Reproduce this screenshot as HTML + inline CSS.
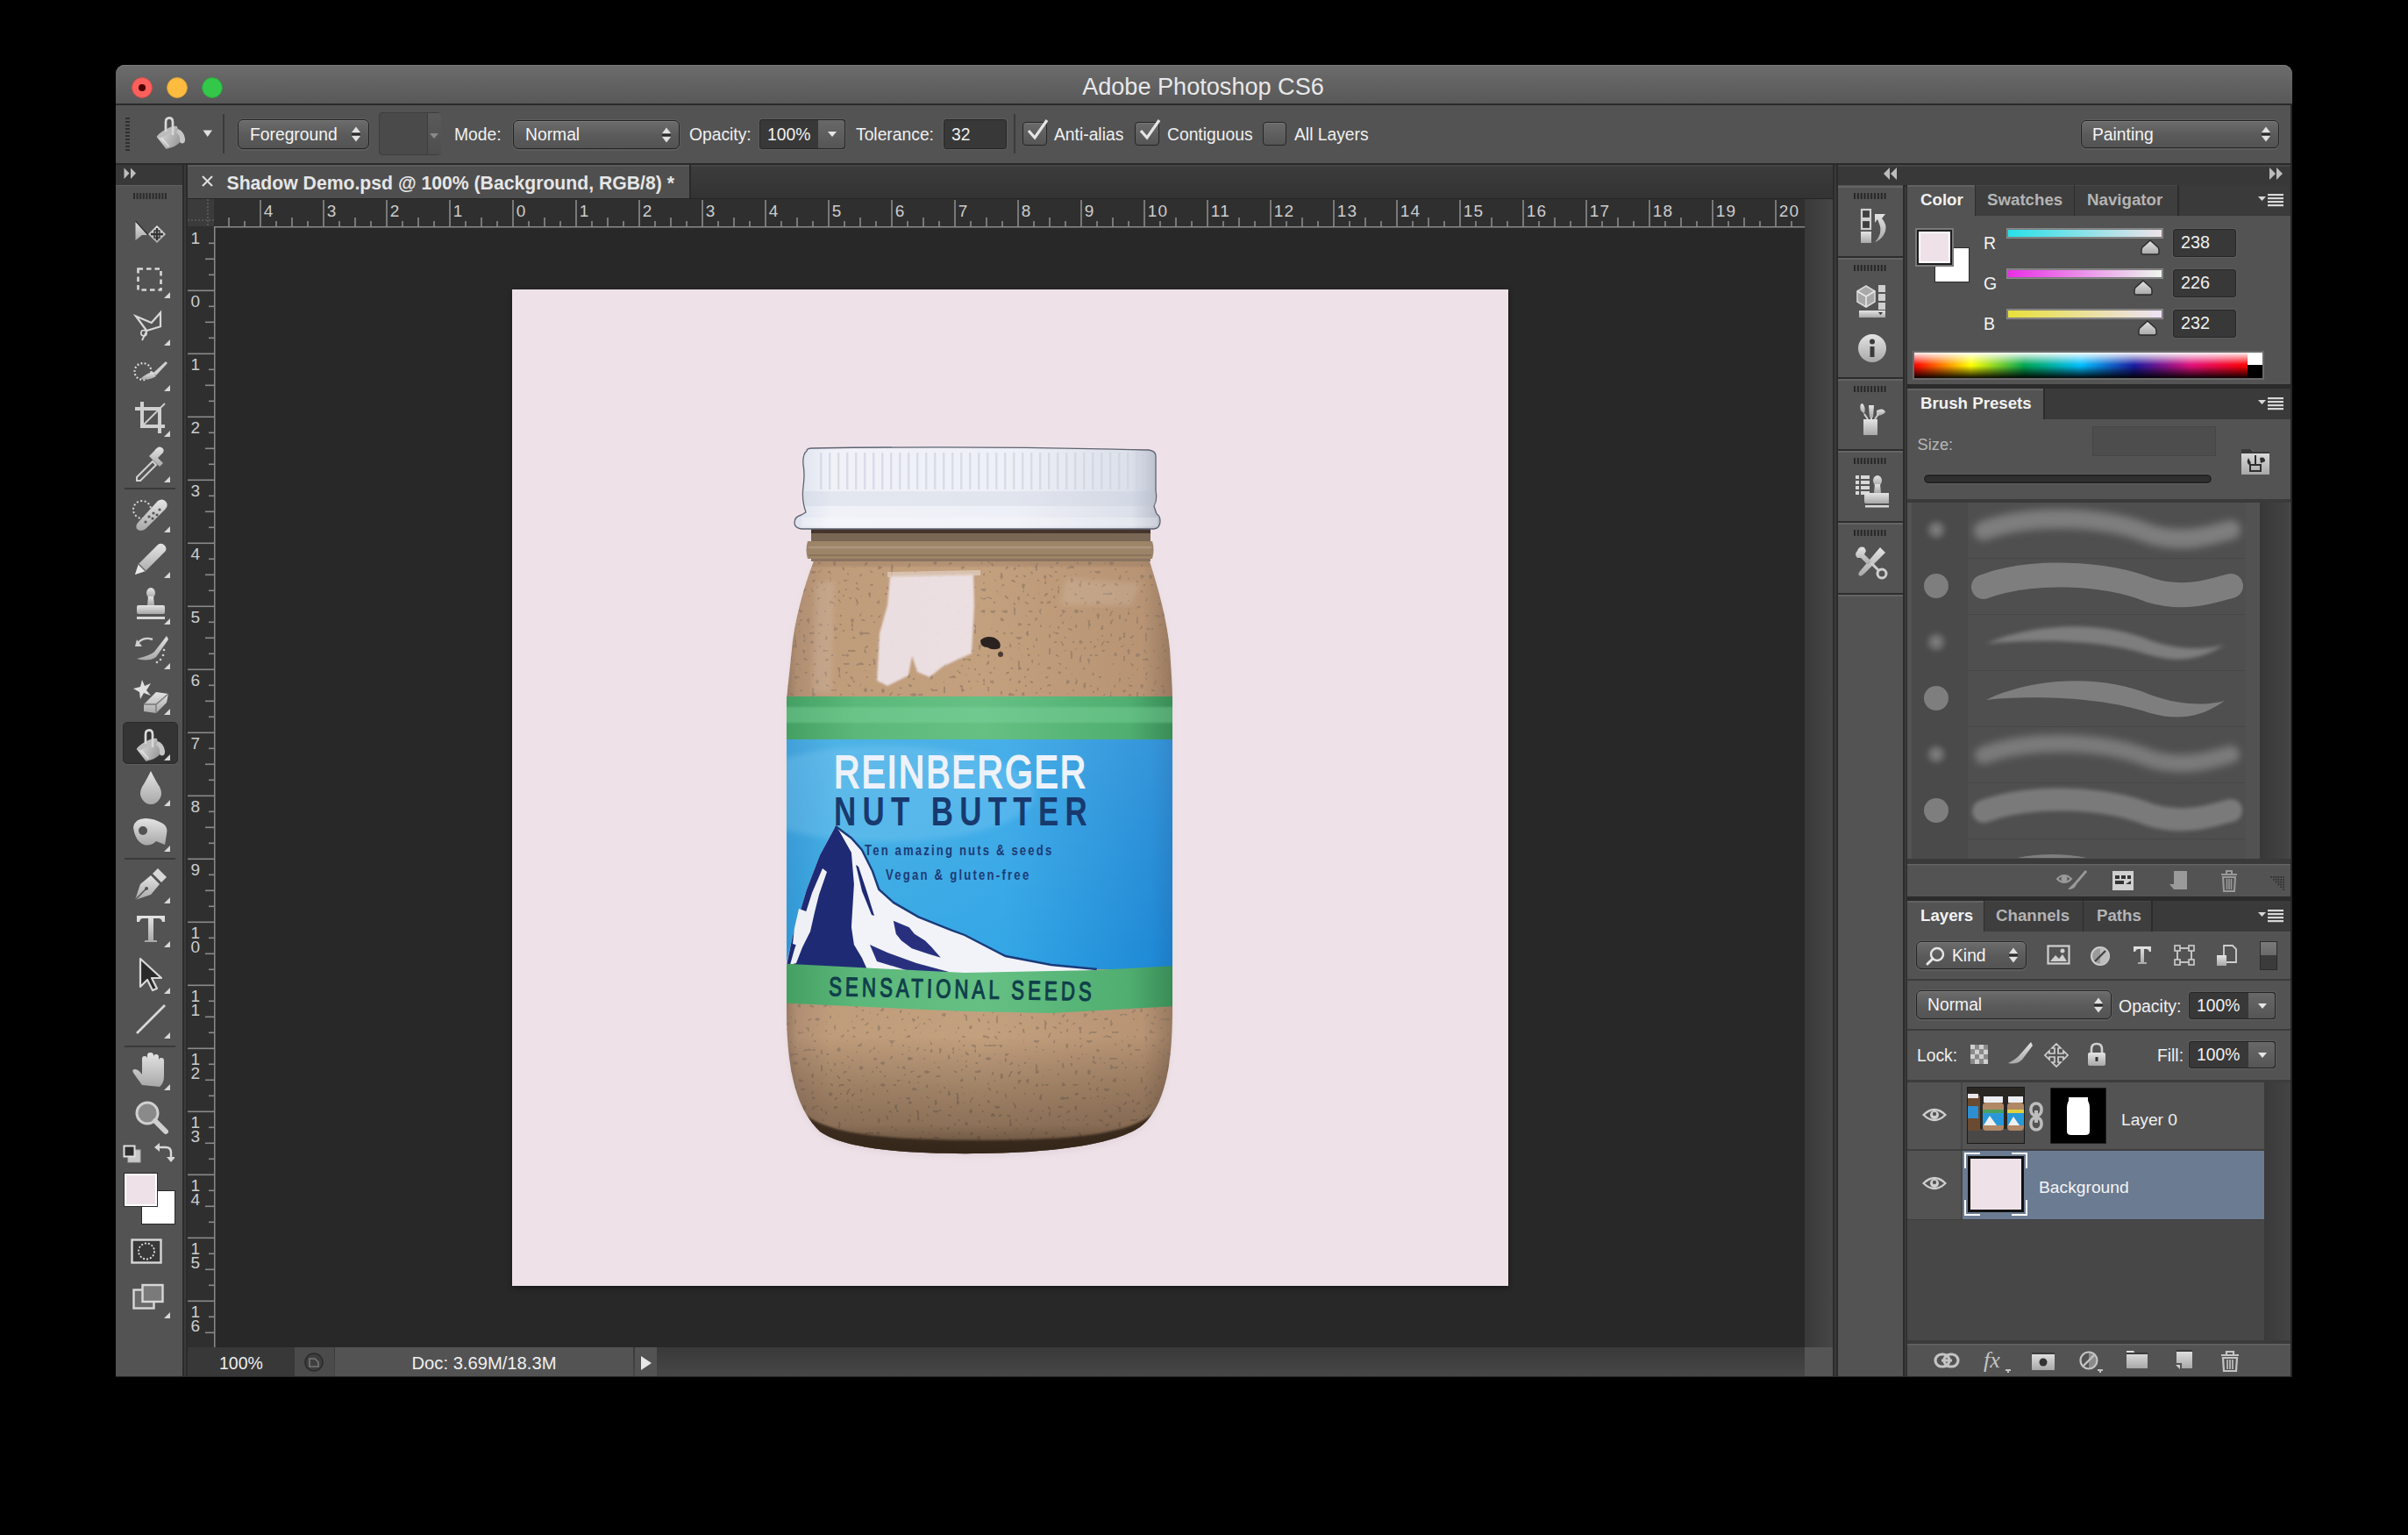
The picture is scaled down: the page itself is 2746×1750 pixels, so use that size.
<!DOCTYPE html>
<html><head><meta charset="utf-8"><style>
html,body{margin:0;padding:0;}
body{width:2746px;height:1750px;background:#000;position:relative;overflow:hidden;font-family:"Liberation Sans",sans-serif;}
</style></head><body>
<div style="position:absolute;left:132px;top:74px;width:2482px;height:1496px;background:#535353;border-radius:10px 10px 0 0;overflow:hidden;"></div>
<div style="position:absolute;left:132px;top:74px;width:2482px;height:44px;background:linear-gradient(#6c6c6c,#585858);border-radius:10px 10px 0 0;box-shadow:inset 0 1px 0 #7a7a7a;"></div>
<div style="position:absolute;left:132px;top:118px;width:2482px;height:2px;background:#2a2a2a;"></div>
<div style="position:absolute;left:872px;width:1000px;text-align:center;top:85.1px;font-size:27.1px;line-height:27.1px;font-weight:400;color:#e8e8e8;white-space:pre;">Adobe Photoshop CS6</div>
<svg style="position:absolute;left:140px;top:78px;" width="120" height="44" viewBox="0 0 120 44">
      <circle cx="22" cy="22" r="11.4" fill="#fc605c" stroke="#de4a45" stroke-width="0.9"/>
      <circle cx="22" cy="22" r="4" fill="#4d0000"/>
      <circle cx="62" cy="22" r="11.4" fill="#fdbc40" stroke="#dea034" stroke-width="0.9"/>
      <circle cx="102" cy="22" r="11.4" fill="#34c84a" stroke="#27aa35" stroke-width="0.9"/></svg>
<div style="position:absolute;left:132px;top:120px;width:2482px;height:66px;background:#535353;"></div>
<div style="position:absolute;left:132px;top:186px;width:2482px;height:2px;background:#2a2a2a;"></div>
<div style="position:absolute;left:132px;top:188px;width:76px;height:23px;background:#383838;"></div>
<div style="position:absolute;left:132px;top:211px;width:76px;height:1359px;background:#535353;box-shadow:inset 0 1px 0 #616161;"></div>
<div style="position:absolute;left:208px;top:188px;width:6px;height:1382px;background:#2b2b2b;"></div>
<div style="position:absolute;left:210px;top:188px;width:2px;height:1382px;background:#3a3a3a;"></div>
<div style="position:absolute;left:214px;top:188px;width:1876px;height:39px;background:linear-gradient(#3c3c3c,#333333);"></div>
<div style="position:absolute;left:214px;top:188px;width:1876px;height:2px;background:#444444;"></div>
<div style="position:absolute;left:214px;top:188px;width:572px;height:38px;background:#4f4f4f;box-shadow:inset 0 2px 0 #5c5c5c;"></div>
<div style="position:absolute;left:786px;top:188px;width:2px;height:38px;background:#2a2a2a;"></div>
<div style="position:absolute;left:214px;top:226px;width:1876px;height:1px;background:#252525;"></div>
<div style="position:absolute;left:214px;top:227px;width:1844px;height:32px;background:#2f2f2f;"></div>
<div style="position:absolute;left:214px;top:259px;width:31px;height:1277px;background:#2f2f2f;"></div>
<div style="position:absolute;left:214px;top:227px;width:30px;height:31px;background:#3b3b3b;"></div>
<div style="position:absolute;left:245px;top:259px;width:1813px;height:1277px;background:#282828;"></div>
<div style="position:absolute;left:2058px;top:227px;width:32px;height:1309px;background:linear-gradient(90deg,#393939,#464646);"></div>
<div style="position:absolute;left:214px;top:1536px;width:1844px;height:33px;background:linear-gradient(#393939,#474747);"></div>
<div style="position:absolute;left:2058px;top:1536px;width:32px;height:33px;background:#555555;"></div>
<div style="position:absolute;left:2090px;top:188px;width:6px;height:1382px;background:#2b2b2b;"></div>
<div style="position:absolute;left:2092px;top:188px;width:2px;height:1382px;background:#3a3a3a;"></div>
<div style="position:absolute;left:2096px;top:188px;width:75px;height:1382px;background:#535353;"></div>
<div style="position:absolute;left:2171px;top:211px;width:4px;height:1359px;background:#2b2b2b;"></div>
<div style="position:absolute;left:2175px;top:188px;width:439px;height:1382px;background:#535353;"></div>
<div style="position:absolute;left:2096px;top:188px;width:518px;height:23px;background:#383838;"></div>
<svg style="position:absolute;left:244px;top:227px;" width="1814" height="33" viewBox="0 0 1814 33"><rect x="16.2" y="21" width="1.6" height="11" fill="#8a8a8a"/><rect x="34.2" y="25" width="1.6" height="7" fill="#8a8a8a"/><rect x="52.2" y="1" width="1.6" height="31" fill="#8a8a8a"/><rect x="70.2" y="25" width="1.6" height="7" fill="#8a8a8a"/><rect x="88.2" y="21" width="1.6" height="11" fill="#8a8a8a"/><rect x="106.2" y="25" width="1.6" height="7" fill="#8a8a8a"/><rect x="124.2" y="1" width="1.6" height="31" fill="#8a8a8a"/><rect x="142.2" y="25" width="1.6" height="7" fill="#8a8a8a"/><rect x="160.2" y="21" width="1.6" height="11" fill="#8a8a8a"/><rect x="178.2" y="25" width="1.6" height="7" fill="#8a8a8a"/><rect x="196.2" y="1" width="1.6" height="31" fill="#8a8a8a"/><rect x="214.2" y="25" width="1.6" height="7" fill="#8a8a8a"/><rect x="232.2" y="21" width="1.6" height="11" fill="#8a8a8a"/><rect x="250.2" y="25" width="1.6" height="7" fill="#8a8a8a"/><rect x="268.2" y="1" width="1.6" height="31" fill="#8a8a8a"/><rect x="286.2" y="25" width="1.6" height="7" fill="#8a8a8a"/><rect x="304.2" y="21" width="1.6" height="11" fill="#8a8a8a"/><rect x="322.2" y="25" width="1.6" height="7" fill="#8a8a8a"/><rect x="340.2" y="1" width="1.6" height="31" fill="#8a8a8a"/><rect x="358.2" y="25" width="1.6" height="7" fill="#8a8a8a"/><rect x="376.2" y="21" width="1.6" height="11" fill="#8a8a8a"/><rect x="394.2" y="25" width="1.6" height="7" fill="#8a8a8a"/><rect x="412.2" y="1" width="1.6" height="31" fill="#8a8a8a"/><rect x="430.2" y="25" width="1.6" height="7" fill="#8a8a8a"/><rect x="448.2" y="21" width="1.6" height="11" fill="#8a8a8a"/><rect x="466.2" y="25" width="1.6" height="7" fill="#8a8a8a"/><rect x="484.2" y="1" width="1.6" height="31" fill="#8a8a8a"/><rect x="502.2" y="25" width="1.6" height="7" fill="#8a8a8a"/><rect x="520.2" y="21" width="1.6" height="11" fill="#8a8a8a"/><rect x="538.2" y="25" width="1.6" height="7" fill="#8a8a8a"/><rect x="556.2" y="1" width="1.6" height="31" fill="#8a8a8a"/><rect x="574.2" y="25" width="1.6" height="7" fill="#8a8a8a"/><rect x="592.2" y="21" width="1.6" height="11" fill="#8a8a8a"/><rect x="610.2" y="25" width="1.6" height="7" fill="#8a8a8a"/><rect x="628.2" y="1" width="1.6" height="31" fill="#8a8a8a"/><rect x="646.2" y="25" width="1.6" height="7" fill="#8a8a8a"/><rect x="664.2" y="21" width="1.6" height="11" fill="#8a8a8a"/><rect x="682.2" y="25" width="1.6" height="7" fill="#8a8a8a"/><rect x="700.2" y="1" width="1.6" height="31" fill="#8a8a8a"/><rect x="718.2" y="25" width="1.6" height="7" fill="#8a8a8a"/><rect x="736.2" y="21" width="1.6" height="11" fill="#8a8a8a"/><rect x="754.2" y="25" width="1.6" height="7" fill="#8a8a8a"/><rect x="772.2" y="1" width="1.6" height="31" fill="#8a8a8a"/><rect x="790.2" y="25" width="1.6" height="7" fill="#8a8a8a"/><rect x="808.2" y="21" width="1.6" height="11" fill="#8a8a8a"/><rect x="826.2" y="25" width="1.6" height="7" fill="#8a8a8a"/><rect x="844.2" y="1" width="1.6" height="31" fill="#8a8a8a"/><rect x="862.2" y="25" width="1.6" height="7" fill="#8a8a8a"/><rect x="880.2" y="21" width="1.6" height="11" fill="#8a8a8a"/><rect x="898.2" y="25" width="1.6" height="7" fill="#8a8a8a"/><rect x="916.2" y="1" width="1.6" height="31" fill="#8a8a8a"/><rect x="934.2" y="25" width="1.6" height="7" fill="#8a8a8a"/><rect x="952.2" y="21" width="1.6" height="11" fill="#8a8a8a"/><rect x="970.2" y="25" width="1.6" height="7" fill="#8a8a8a"/><rect x="988.2" y="1" width="1.6" height="31" fill="#8a8a8a"/><rect x="1006.2" y="25" width="1.6" height="7" fill="#8a8a8a"/><rect x="1024.2" y="21" width="1.6" height="11" fill="#8a8a8a"/><rect x="1042.2" y="25" width="1.6" height="7" fill="#8a8a8a"/><rect x="1060.2" y="1" width="1.6" height="31" fill="#8a8a8a"/><rect x="1078.2" y="25" width="1.6" height="7" fill="#8a8a8a"/><rect x="1096.2" y="21" width="1.6" height="11" fill="#8a8a8a"/><rect x="1114.2" y="25" width="1.6" height="7" fill="#8a8a8a"/><rect x="1132.2" y="1" width="1.6" height="31" fill="#8a8a8a"/><rect x="1150.2" y="25" width="1.6" height="7" fill="#8a8a8a"/><rect x="1168.2" y="21" width="1.6" height="11" fill="#8a8a8a"/><rect x="1186.2" y="25" width="1.6" height="7" fill="#8a8a8a"/><rect x="1204.2" y="1" width="1.6" height="31" fill="#8a8a8a"/><rect x="1222.2" y="25" width="1.6" height="7" fill="#8a8a8a"/><rect x="1240.2" y="21" width="1.6" height="11" fill="#8a8a8a"/><rect x="1258.2" y="25" width="1.6" height="7" fill="#8a8a8a"/><rect x="1276.2" y="1" width="1.6" height="31" fill="#8a8a8a"/><rect x="1294.2" y="25" width="1.6" height="7" fill="#8a8a8a"/><rect x="1312.2" y="21" width="1.6" height="11" fill="#8a8a8a"/><rect x="1330.2" y="25" width="1.6" height="7" fill="#8a8a8a"/><rect x="1348.2" y="1" width="1.6" height="31" fill="#8a8a8a"/><rect x="1366.2" y="25" width="1.6" height="7" fill="#8a8a8a"/><rect x="1384.2" y="21" width="1.6" height="11" fill="#8a8a8a"/><rect x="1402.2" y="25" width="1.6" height="7" fill="#8a8a8a"/><rect x="1420.2" y="1" width="1.6" height="31" fill="#8a8a8a"/><rect x="1438.2" y="25" width="1.6" height="7" fill="#8a8a8a"/><rect x="1456.2" y="21" width="1.6" height="11" fill="#8a8a8a"/><rect x="1474.2" y="25" width="1.6" height="7" fill="#8a8a8a"/><rect x="1492.2" y="1" width="1.6" height="31" fill="#8a8a8a"/><rect x="1510.2" y="25" width="1.6" height="7" fill="#8a8a8a"/><rect x="1528.2" y="21" width="1.6" height="11" fill="#8a8a8a"/><rect x="1546.2" y="25" width="1.6" height="7" fill="#8a8a8a"/><rect x="1564.2" y="1" width="1.6" height="31" fill="#8a8a8a"/><rect x="1582.2" y="25" width="1.6" height="7" fill="#8a8a8a"/><rect x="1600.2" y="21" width="1.6" height="11" fill="#8a8a8a"/><rect x="1618.2" y="25" width="1.6" height="7" fill="#8a8a8a"/><rect x="1636.2" y="1" width="1.6" height="31" fill="#8a8a8a"/><rect x="1654.2" y="25" width="1.6" height="7" fill="#8a8a8a"/><rect x="1672.2" y="21" width="1.6" height="11" fill="#8a8a8a"/><rect x="1690.2" y="25" width="1.6" height="7" fill="#8a8a8a"/><rect x="1708.2" y="1" width="1.6" height="31" fill="#8a8a8a"/><rect x="1726.2" y="25" width="1.6" height="7" fill="#8a8a8a"/><rect x="1744.2" y="21" width="1.6" height="11" fill="#8a8a8a"/><rect x="1762.2" y="25" width="1.6" height="7" fill="#8a8a8a"/><rect x="1780.2" y="1" width="1.6" height="31" fill="#8a8a8a"/><rect x="1798.2" y="25" width="1.6" height="7" fill="#8a8a8a"/><rect x="0" y="31" width="1814" height="1.5" fill="#8a8a8a"/><text x="56.7" y="19.5" font-size="19" letter-spacing="1.3" fill="#cdcdcd" font-family="Liberation Sans">4</text><text x="128.7" y="19.5" font-size="19" letter-spacing="1.3" fill="#cdcdcd" font-family="Liberation Sans">3</text><text x="200.7" y="19.5" font-size="19" letter-spacing="1.3" fill="#cdcdcd" font-family="Liberation Sans">2</text><text x="272.7" y="19.5" font-size="19" letter-spacing="1.3" fill="#cdcdcd" font-family="Liberation Sans">1</text><text x="344.7" y="19.5" font-size="19" letter-spacing="1.3" fill="#cdcdcd" font-family="Liberation Sans">0</text><text x="416.7" y="19.5" font-size="19" letter-spacing="1.3" fill="#cdcdcd" font-family="Liberation Sans">1</text><text x="488.7" y="19.5" font-size="19" letter-spacing="1.3" fill="#cdcdcd" font-family="Liberation Sans">2</text><text x="560.7" y="19.5" font-size="19" letter-spacing="1.3" fill="#cdcdcd" font-family="Liberation Sans">3</text><text x="632.7" y="19.5" font-size="19" letter-spacing="1.3" fill="#cdcdcd" font-family="Liberation Sans">4</text><text x="704.7" y="19.5" font-size="19" letter-spacing="1.3" fill="#cdcdcd" font-family="Liberation Sans">5</text><text x="776.7" y="19.5" font-size="19" letter-spacing="1.3" fill="#cdcdcd" font-family="Liberation Sans">6</text><text x="848.7" y="19.5" font-size="19" letter-spacing="1.3" fill="#cdcdcd" font-family="Liberation Sans">7</text><text x="920.7" y="19.5" font-size="19" letter-spacing="1.3" fill="#cdcdcd" font-family="Liberation Sans">8</text><text x="992.7" y="19.5" font-size="19" letter-spacing="1.3" fill="#cdcdcd" font-family="Liberation Sans">9</text><text x="1064.7" y="19.5" font-size="19" letter-spacing="1.3" fill="#cdcdcd" font-family="Liberation Sans">10</text><text x="1136.7" y="19.5" font-size="19" letter-spacing="1.3" fill="#cdcdcd" font-family="Liberation Sans">11</text><text x="1208.7" y="19.5" font-size="19" letter-spacing="1.3" fill="#cdcdcd" font-family="Liberation Sans">12</text><text x="1280.7" y="19.5" font-size="19" letter-spacing="1.3" fill="#cdcdcd" font-family="Liberation Sans">13</text><text x="1352.7" y="19.5" font-size="19" letter-spacing="1.3" fill="#cdcdcd" font-family="Liberation Sans">14</text><text x="1424.7" y="19.5" font-size="19" letter-spacing="1.3" fill="#cdcdcd" font-family="Liberation Sans">15</text><text x="1496.7" y="19.5" font-size="19" letter-spacing="1.3" fill="#cdcdcd" font-family="Liberation Sans">16</text><text x="1568.7" y="19.5" font-size="19" letter-spacing="1.3" fill="#cdcdcd" font-family="Liberation Sans">17</text><text x="1640.7" y="19.5" font-size="19" letter-spacing="1.3" fill="#cdcdcd" font-family="Liberation Sans">18</text><text x="1712.7" y="19.5" font-size="19" letter-spacing="1.3" fill="#cdcdcd" font-family="Liberation Sans">19</text><text x="1784.7" y="19.5" font-size="19" letter-spacing="1.3" fill="#cdcdcd" font-family="Liberation Sans">20</text></svg>
<svg style="position:absolute;left:214px;top:258px;" width="32" height="1278" viewBox="0 0 32 1278"><rect x="24" y="18.5" width="7" height="1.6" fill="#8a8a8a"/><rect x="20" y="36.5" width="11" height="1.6" fill="#8a8a8a"/><rect x="24" y="54.5" width="7" height="1.6" fill="#8a8a8a"/><text x="3.5" y="20.0" font-size="19" fill="#cdcdcd" font-family="Liberation Sans">1</text><rect x="0" y="72.5" width="31" height="1.6" fill="#8a8a8a"/><rect x="24" y="90.5" width="7" height="1.6" fill="#8a8a8a"/><rect x="20" y="108.5" width="11" height="1.6" fill="#8a8a8a"/><rect x="24" y="126.5" width="7" height="1.6" fill="#8a8a8a"/><text x="3.5" y="92.0" font-size="19" fill="#cdcdcd" font-family="Liberation Sans">0</text><rect x="0" y="144.5" width="31" height="1.6" fill="#8a8a8a"/><rect x="24" y="162.5" width="7" height="1.6" fill="#8a8a8a"/><rect x="20" y="180.5" width="11" height="1.6" fill="#8a8a8a"/><rect x="24" y="198.5" width="7" height="1.6" fill="#8a8a8a"/><text x="3.5" y="164.0" font-size="19" fill="#cdcdcd" font-family="Liberation Sans">1</text><rect x="0" y="216.5" width="31" height="1.6" fill="#8a8a8a"/><rect x="24" y="234.5" width="7" height="1.6" fill="#8a8a8a"/><rect x="20" y="252.5" width="11" height="1.6" fill="#8a8a8a"/><rect x="24" y="270.5" width="7" height="1.6" fill="#8a8a8a"/><text x="3.5" y="236.0" font-size="19" fill="#cdcdcd" font-family="Liberation Sans">2</text><rect x="0" y="288.5" width="31" height="1.6" fill="#8a8a8a"/><rect x="24" y="306.5" width="7" height="1.6" fill="#8a8a8a"/><rect x="20" y="324.5" width="11" height="1.6" fill="#8a8a8a"/><rect x="24" y="342.5" width="7" height="1.6" fill="#8a8a8a"/><text x="3.5" y="308.0" font-size="19" fill="#cdcdcd" font-family="Liberation Sans">3</text><rect x="0" y="360.5" width="31" height="1.6" fill="#8a8a8a"/><rect x="24" y="378.5" width="7" height="1.6" fill="#8a8a8a"/><rect x="20" y="396.5" width="11" height="1.6" fill="#8a8a8a"/><rect x="24" y="414.5" width="7" height="1.6" fill="#8a8a8a"/><text x="3.5" y="380.0" font-size="19" fill="#cdcdcd" font-family="Liberation Sans">4</text><rect x="0" y="432.5" width="31" height="1.6" fill="#8a8a8a"/><rect x="24" y="450.5" width="7" height="1.6" fill="#8a8a8a"/><rect x="20" y="468.5" width="11" height="1.6" fill="#8a8a8a"/><rect x="24" y="486.5" width="7" height="1.6" fill="#8a8a8a"/><text x="3.5" y="452.0" font-size="19" fill="#cdcdcd" font-family="Liberation Sans">5</text><rect x="0" y="504.5" width="31" height="1.6" fill="#8a8a8a"/><rect x="24" y="522.5" width="7" height="1.6" fill="#8a8a8a"/><rect x="20" y="540.5" width="11" height="1.6" fill="#8a8a8a"/><rect x="24" y="558.5" width="7" height="1.6" fill="#8a8a8a"/><text x="3.5" y="524.0" font-size="19" fill="#cdcdcd" font-family="Liberation Sans">6</text><rect x="0" y="576.5" width="31" height="1.6" fill="#8a8a8a"/><rect x="24" y="594.5" width="7" height="1.6" fill="#8a8a8a"/><rect x="20" y="612.5" width="11" height="1.6" fill="#8a8a8a"/><rect x="24" y="630.5" width="7" height="1.6" fill="#8a8a8a"/><text x="3.5" y="596.0" font-size="19" fill="#cdcdcd" font-family="Liberation Sans">7</text><rect x="0" y="648.5" width="31" height="1.6" fill="#8a8a8a"/><rect x="24" y="666.5" width="7" height="1.6" fill="#8a8a8a"/><rect x="20" y="684.5" width="11" height="1.6" fill="#8a8a8a"/><rect x="24" y="702.5" width="7" height="1.6" fill="#8a8a8a"/><text x="3.5" y="668.0" font-size="19" fill="#cdcdcd" font-family="Liberation Sans">8</text><rect x="0" y="720.5" width="31" height="1.6" fill="#8a8a8a"/><rect x="24" y="738.5" width="7" height="1.6" fill="#8a8a8a"/><rect x="20" y="756.5" width="11" height="1.6" fill="#8a8a8a"/><rect x="24" y="774.5" width="7" height="1.6" fill="#8a8a8a"/><text x="3.5" y="740.0" font-size="19" fill="#cdcdcd" font-family="Liberation Sans">9</text><rect x="0" y="792.5" width="31" height="1.6" fill="#8a8a8a"/><rect x="24" y="810.5" width="7" height="1.6" fill="#8a8a8a"/><rect x="20" y="828.5" width="11" height="1.6" fill="#8a8a8a"/><rect x="24" y="846.5" width="7" height="1.6" fill="#8a8a8a"/><text x="3.5" y="812.0" font-size="19" fill="#cdcdcd" font-family="Liberation Sans">1</text><text x="3.5" y="827.5" font-size="19" fill="#cdcdcd" font-family="Liberation Sans">0</text><rect x="0" y="864.5" width="31" height="1.6" fill="#8a8a8a"/><rect x="24" y="882.5" width="7" height="1.6" fill="#8a8a8a"/><rect x="20" y="900.5" width="11" height="1.6" fill="#8a8a8a"/><rect x="24" y="918.5" width="7" height="1.6" fill="#8a8a8a"/><text x="3.5" y="884.0" font-size="19" fill="#cdcdcd" font-family="Liberation Sans">1</text><text x="3.5" y="899.5" font-size="19" fill="#cdcdcd" font-family="Liberation Sans">1</text><rect x="0" y="936.5" width="31" height="1.6" fill="#8a8a8a"/><rect x="24" y="954.5" width="7" height="1.6" fill="#8a8a8a"/><rect x="20" y="972.5" width="11" height="1.6" fill="#8a8a8a"/><rect x="24" y="990.5" width="7" height="1.6" fill="#8a8a8a"/><text x="3.5" y="956.0" font-size="19" fill="#cdcdcd" font-family="Liberation Sans">1</text><text x="3.5" y="971.5" font-size="19" fill="#cdcdcd" font-family="Liberation Sans">2</text><rect x="0" y="1008.5" width="31" height="1.6" fill="#8a8a8a"/><rect x="24" y="1026.5" width="7" height="1.6" fill="#8a8a8a"/><rect x="20" y="1044.5" width="11" height="1.6" fill="#8a8a8a"/><rect x="24" y="1062.5" width="7" height="1.6" fill="#8a8a8a"/><text x="3.5" y="1028.0" font-size="19" fill="#cdcdcd" font-family="Liberation Sans">1</text><text x="3.5" y="1043.5" font-size="19" fill="#cdcdcd" font-family="Liberation Sans">3</text><rect x="0" y="1080.5" width="31" height="1.6" fill="#8a8a8a"/><rect x="24" y="1098.5" width="7" height="1.6" fill="#8a8a8a"/><rect x="20" y="1116.5" width="11" height="1.6" fill="#8a8a8a"/><rect x="24" y="1134.5" width="7" height="1.6" fill="#8a8a8a"/><text x="3.5" y="1100.0" font-size="19" fill="#cdcdcd" font-family="Liberation Sans">1</text><text x="3.5" y="1115.5" font-size="19" fill="#cdcdcd" font-family="Liberation Sans">4</text><rect x="0" y="1152.5" width="31" height="1.6" fill="#8a8a8a"/><rect x="24" y="1170.5" width="7" height="1.6" fill="#8a8a8a"/><rect x="20" y="1188.5" width="11" height="1.6" fill="#8a8a8a"/><rect x="24" y="1206.5" width="7" height="1.6" fill="#8a8a8a"/><text x="3.5" y="1172.0" font-size="19" fill="#cdcdcd" font-family="Liberation Sans">1</text><text x="3.5" y="1187.5" font-size="19" fill="#cdcdcd" font-family="Liberation Sans">5</text><rect x="0" y="1224.5" width="31" height="1.6" fill="#8a8a8a"/><rect x="24" y="1242.5" width="7" height="1.6" fill="#8a8a8a"/><rect x="20" y="1260.5" width="11" height="1.6" fill="#8a8a8a"/><text x="3.5" y="1244.0" font-size="19" fill="#cdcdcd" font-family="Liberation Sans">1</text><text x="3.5" y="1259.5" font-size="19" fill="#cdcdcd" font-family="Liberation Sans">6</text><rect x="30" y="0" width="1.5" height="1278" fill="#8a8a8a"/></svg>
<svg style="position:absolute;left:214px;top:227px;" width="30" height="31" viewBox="0 0 30 31"><line x1="23" y1="0" x2="23" y2="31" stroke="#6a6a6a" stroke-width="1.2" stroke-dasharray="2,2"/><line x1="0" y1="24" x2="30" y2="24" stroke="#6a6a6a" stroke-width="1.2" stroke-dasharray="2,2"/></svg>
<svg style="position:absolute;left:143px;top:134px;" width="5" height="40" viewBox="0 0 5 40"><rect x="0" y="0" width="5" height="2" fill="#2f2f2f"/><rect x="0" y="4" width="5" height="2" fill="#2f2f2f"/><rect x="0" y="8" width="5" height="2" fill="#2f2f2f"/><rect x="0" y="12" width="5" height="2" fill="#2f2f2f"/><rect x="0" y="16" width="5" height="2" fill="#2f2f2f"/><rect x="0" y="20" width="5" height="2" fill="#2f2f2f"/><rect x="0" y="24" width="5" height="2" fill="#2f2f2f"/><rect x="0" y="28" width="5" height="2" fill="#2f2f2f"/><rect x="0" y="32" width="5" height="2" fill="#2f2f2f"/><rect x="0" y="36" width="5" height="2" fill="#2f2f2f"/></svg>
<svg style="position:absolute;left:176px;top:130px;" width="40" height="42" viewBox="0 0 40 42"><defs><linearGradient id="bkg" x1="0" y1="0" x2="1" y2="1"><stop offset="0" stop-color="#dcdcdc"/><stop offset="1" stop-color="#8e8e8e"/></linearGradient></defs>
    <g transform="scale(1.0)">
    <path d="M13 20 L13 9 Q13 4.5 17 4.5 Q21 4.5 21 9 L21 21" fill="none" stroke="#d0d0d0" stroke-width="2.4"/>
    <g transform="rotate(-28 18 27)">
      <path d="M5 19 L31 19 L28 36 Q18 40 8 36 Z" fill="url(#bkg)"/>
      <ellipse cx="18" cy="19.5" rx="13" ry="3.2" fill="#bcbcbc"/>
      <path d="M9 23 L12 35" stroke="#eeeeee" stroke-width="2" opacity="0.6"/>
    </g>
    <path d="M27 17 Q34 20 35 28 Q35.5 33 32 33.5 Q28.5 33.5 29 29 Q29.5 24 25 21 Z" fill="#c6c6c6"/>
    <path d="M13 20 L13 9 Q13 4.5 17 4.5 Q21 4.5 21 9 L21 24" fill="none" stroke="#d8d8d8" stroke-width="2.4"/>
    </g></svg>
<svg style="position:absolute;left:231px;top:148px;" width="12" height="9" viewBox="0 0 12 9"><path d="M0.5 0.5 L11 0.5 L5.75 8 Z" fill="#e0e0e0"/></svg>
<div style="position:absolute;left:254px;top:130px;width:2px;height:45px;background:#3a3a3a;"></div>
<div style="position:absolute;left:270px;top:135px;width:152px;height:37px;border-radius:7px;background:rgba(255,255,255,0.06);"></div>
<div style="position:absolute;left:271px;top:136px;width:150px;height:34px;box-sizing:border-box;border:1.6px solid #232323;border-radius:6px;background:linear-gradient(#6c6c6c,#5a5a5a 55%,#535353);box-shadow:inset 0 1px 0 #7b7b7b;"></div>
<div style="position:absolute;left:285px;top:143.7px;font-size:19.3px;line-height:19.3px;font-weight:400;color:#f4f4f4;white-space:pre;">Foreground</div>
<svg style="position:absolute;left:400px;top:143.0px;" width="12" height="20" viewBox="0 0 12 20"><path d="M1 8 L6 1.5 L11 8 Z" fill="#e0e0e0"/><path d="M1 12 L6 18.5 L11 12 Z" fill="#e0e0e0"/><rect x="1" y="9" width="10" height="2" fill="#2a2a2a"/></svg>
<div style="position:absolute;left:432px;top:128px;width:71px;height:49px;box-sizing:border-box;border:1.5px solid #3d3d3d;border-radius:4px;background:#4a4a4a;"></div>
<div style="position:absolute;left:487px;top:129px;width:15px;height:47px;background:linear-gradient(#5a5a5a,#4e4e4e);border-left:1.5px solid #3d3d3d;border-radius:0 3px 3px 0;"></div>
<svg style="position:absolute;left:489px;top:151px;" width="12" height="8" viewBox="0 0 12 8"><path d="M1 1 L11 1 L6 7 Z" fill="#8a8a8a"/></svg>
<div style="position:absolute;left:518px;top:143.7px;font-size:19.3px;line-height:19.3px;font-weight:400;color:#f0f0f0;white-space:pre;">Mode:</div>
<div style="position:absolute;left:584px;top:136px;width:192px;height:36px;border-radius:7px;background:rgba(255,255,255,0.06);"></div>
<div style="position:absolute;left:585px;top:137px;width:190px;height:33px;box-sizing:border-box;border:1.6px solid #232323;border-radius:6px;background:linear-gradient(#6c6c6c,#5a5a5a 55%,#535353);box-shadow:inset 0 1px 0 #7b7b7b;"></div>
<div style="position:absolute;left:599px;top:144.2px;font-size:19.3px;line-height:19.3px;font-weight:400;color:#f4f4f4;white-space:pre;">Normal</div>
<svg style="position:absolute;left:754px;top:143.5px;" width="12" height="20" viewBox="0 0 12 20"><path d="M1 8 L6 1.5 L11 8 Z" fill="#e0e0e0"/><path d="M1 12 L6 18.5 L11 12 Z" fill="#e0e0e0"/><rect x="1" y="9" width="10" height="2" fill="#2a2a2a"/></svg>
<div style="position:absolute;left:786px;top:143.7px;font-size:19.3px;line-height:19.3px;font-weight:400;color:#f0f0f0;white-space:pre;">Opacity:</div>
<div style="position:absolute;left:865px;top:135px;width:100px;height:36px;border-radius:4px;background:#5d5d5d;"></div>
<div style="position:absolute;left:866px;top:136px;width:98px;height:34px;box-sizing:border-box;border:1.5px solid #262626;background:#383838;border-radius:3px;"></div>
<div style="position:absolute;left:933px;top:136px;width:31px;height:34px;box-sizing:border-box;border:1.5px solid #262626;border-left:none;border-radius:0 4px 4px 0;background:linear-gradient(#686868,#555);"></div>
<svg style="position:absolute;left:942.5px;top:149.0px;" width="12" height="8" viewBox="0 0 12 8"><path d="M1 1 L11 1 L6 7 Z" fill="#e6e6e6"/></svg>
<div style="position:absolute;left:875px;top:143.7px;font-size:19.3px;line-height:19.3px;font-weight:400;color:#f0f0f0;white-space:pre;">100%</div>
<div style="position:absolute;left:976px;top:143.7px;font-size:19.3px;line-height:19.3px;font-weight:400;color:#f0f0f0;white-space:pre;">Tolerance:</div>
<div style="position:absolute;left:1075px;top:135px;width:74px;height:36px;border-radius:4px;background:#5d5d5d;"></div>
<div style="position:absolute;left:1076px;top:136px;width:72px;height:34px;box-sizing:border-box;border:1.5px solid #262626;background:#383838;border-radius:3px;"></div>
<div style="position:absolute;left:1085px;top:143.7px;font-size:19.3px;line-height:19.3px;font-weight:400;color:#f0f0f0;white-space:pre;">32</div>
<div style="position:absolute;left:1156px;top:130px;width:2px;height:45px;background:#3a3a3a;"></div>
<div style="position:absolute;left:1166px;top:139px;width:28px;height:27px;box-sizing:border-box;border:1.5px solid #262626;border-radius:4px;background:linear-gradient(#6a6a6a,#555);box-shadow:inset 0 1px 0 #777;"></div>
<svg style="position:absolute;left:1168px;top:134px;" width="32" height="32" viewBox="0 0 32 32"><path d="M5 15 L12 23 L26 3" fill="none" stroke="#e6e6e6" stroke-width="3.2" stroke-linejoin="miter"/></svg>
<div style="position:absolute;left:1202px;top:143.7px;font-size:19.3px;line-height:19.3px;font-weight:400;color:#f0f0f0;white-space:pre;">Anti-alias</div>
<div style="position:absolute;left:1294px;top:139px;width:28px;height:27px;box-sizing:border-box;border:1.5px solid #262626;border-radius:4px;background:linear-gradient(#6a6a6a,#555);box-shadow:inset 0 1px 0 #777;"></div>
<svg style="position:absolute;left:1296px;top:134px;" width="32" height="32" viewBox="0 0 32 32"><path d="M5 15 L12 23 L26 3" fill="none" stroke="#e6e6e6" stroke-width="3.2" stroke-linejoin="miter"/></svg>
<div style="position:absolute;left:1331px;top:143.7px;font-size:19.3px;line-height:19.3px;font-weight:400;color:#f0f0f0;white-space:pre;">Contiguous</div>
<div style="position:absolute;left:1440px;top:139px;width:27px;height:27px;box-sizing:border-box;border:1.5px solid #262626;border-radius:4px;background:linear-gradient(#6a6a6a,#555);box-shadow:inset 0 1px 0 #777;"></div>
<div style="position:absolute;left:1476px;top:143.7px;font-size:19.3px;line-height:19.3px;font-weight:400;color:#f0f0f0;white-space:pre;">All Layers</div>
<div style="position:absolute;left:2372px;top:136px;width:228px;height:35px;border-radius:7px;background:rgba(255,255,255,0.06);"></div>
<div style="position:absolute;left:2373px;top:137px;width:226px;height:32px;box-sizing:border-box;border:1.6px solid #232323;border-radius:6px;background:linear-gradient(#6c6c6c,#5a5a5a 55%,#535353);box-shadow:inset 0 1px 0 #7b7b7b;"></div>
<div style="position:absolute;left:2386px;top:143.7px;font-size:19.3px;line-height:19.3px;font-weight:400;color:#f4f4f4;white-space:pre;">Painting</div>
<svg style="position:absolute;left:2578px;top:143.0px;" width="12" height="20" viewBox="0 0 12 20"><path d="M1 8 L6 1.5 L11 8 Z" fill="#e0e0e0"/><path d="M1 12 L6 18.5 L11 12 Z" fill="#e0e0e0"/><rect x="1" y="9" width="10" height="2" fill="#2a2a2a"/></svg>
<svg style="position:absolute;left:229px;top:199px;" width="15" height="15" viewBox="0 0 15 15"><path d="M2 2 L13 13 M13 2 L2 13" stroke="#e0e0e0" stroke-width="2"/></svg>
<div style="position:absolute;left:258.5px;top:198.1px;font-size:21.2px;line-height:21.2px;font-weight:700;color:#e6e6e6;white-space:pre;">Shadow Demo.psd @ 100% (Background, RGB/8) *</div>
<svg style="position:absolute;left:141px;top:191px;" width="18" height="14" viewBox="0 0 18 14"><path d="M0.5 0.5 L6.5 6.5 L0.5 13 Z" fill="#bdbdbd"/><path d="M8 0.5 L14 6.5 L8 13 Z" fill="#bdbdbd"/></svg>
<div style="position:absolute;left:214px;top:1536px;width:122px;height:33px;background:#383838;"></div>
<div style="position:absolute;left:250px;top:1544.5px;font-size:19.5px;line-height:19.5px;font-weight:400;color:#eeeeee;white-space:pre;">100%</div>
<div style="position:absolute;left:336px;top:1536px;width:45px;height:33px;background:#4b4b4b;"></div>
<svg style="position:absolute;left:346px;top:1541px;" width="24" height="24" viewBox="0 0 24 24"><circle cx="12" cy="12" r="10" fill="#3e3e3e" stroke="#2a2a2a" stroke-width="1.5"/><path d="M7 8 L13 8 L17 12 L17 17 L7 17 Z" fill="none" stroke="#777" stroke-width="1.6"/></svg>
<div style="position:absolute;left:382px;top:1536px;width:340px;height:33px;background:#535353;"></div>
<div style="position:absolute;left:52px;width:1000px;text-align:center;top:1543.9px;font-size:20.2px;line-height:20.2px;font-weight:400;color:#f0f0f0;white-space:pre;">Doc: 3.69M/18.3M</div>
<div style="position:absolute;left:724px;top:1536px;width:25px;height:33px;background:#535353;"></div>
<svg style="position:absolute;left:729px;top:1545px;" width="16" height="18" viewBox="0 0 16 18"><path d="M2 1 L14 9 L2 17 Z" fill="#e8e8e8"/></svg>
<div style="position:absolute;left:132px;top:211px;width:76px;height:1px;background:#616161;"></div>
<svg style="position:absolute;left:152px;top:220px;" width="40" height="7" viewBox="0 0 40 7"><rect x="0.0" y="0" width="2" height="7" fill="#2c2c2c"/><rect x="3.6" y="0" width="2" height="7" fill="#2c2c2c"/><rect x="7.2" y="0" width="2" height="7" fill="#2c2c2c"/><rect x="10.8" y="0" width="2" height="7" fill="#2c2c2c"/><rect x="14.4" y="0" width="2" height="7" fill="#2c2c2c"/><rect x="18.0" y="0" width="2" height="7" fill="#2c2c2c"/><rect x="21.6" y="0" width="2" height="7" fill="#2c2c2c"/><rect x="25.2" y="0" width="2" height="7" fill="#2c2c2c"/><rect x="28.8" y="0" width="2" height="7" fill="#2c2c2c"/><rect x="32.4" y="0" width="2" height="7" fill="#2c2c2c"/><rect x="36.0" y="0" width="2" height="7" fill="#2c2c2c"/></svg>
<svg style="position:absolute;left:148px;top:241px;" width="48" height="48" viewBox="0 0 48 48"><defs><linearGradient id="ig" x1="0" y1="0" x2="0" y2="1"><stop offset="0" stop-color="#e4e4e4"/><stop offset="1" stop-color="#a8a8a8"/></linearGradient></defs><path d="M6.5 11 L6.5 33 L14 27 L21 27 Z" fill="url(#ig)"/><path d="M6.5 11 L21 27" stroke="#2a2a2a" stroke-width="1.2"/><path d="M31 16 L41 26 L31 36 L21 26 Z" fill="url(#ig)"/><path d="M31 19 L31 33 M24 26 L38 26" stroke="#333" stroke-width="2.4"/><path d="M28 22 L34 22 L34 30 L28 30 Z" fill="none" stroke="#333" stroke-width="1.4"/></svg>
<svg style="position:absolute;left:148px;top:294px;" width="48" height="48" viewBox="0 0 48 48"><defs><linearGradient id="ig" x1="0" y1="0" x2="0" y2="1"><stop offset="0" stop-color="#e4e4e4"/><stop offset="1" stop-color="#a8a8a8"/></linearGradient></defs><rect x="9.5" y="12.5" width="26" height="24" fill="none" stroke="#d8d8d8" stroke-width="2.6" stroke-dasharray="5.5,4"/></svg>
<svg style="position:absolute;left:187px;top:333px;" width="8" height="8" viewBox="0 0 8 8"><path d="M7 0 L7 7 L0 7 Z" fill="#d8d8d8"/></svg>
<svg style="position:absolute;left:148px;top:348px;" width="48" height="48" viewBox="0 0 48 48"><defs><linearGradient id="ig" x1="0" y1="0" x2="0" y2="1"><stop offset="0" stop-color="#e4e4e4"/><stop offset="1" stop-color="#a8a8a8"/></linearGradient></defs><path d="M7 12.5 L24.7 20 L35 8.4 L35 24.2 L19.2 29 Z" fill="none" stroke="#d8d8d8" stroke-width="2.2" stroke-linejoin="miter"/><circle cx="16" cy="31.7" r="3.2" fill="none" stroke="#d8d8d8" stroke-width="1.6"/><path d="M19 30 L14 40" stroke="#d8d8d8" stroke-width="1.8"/></svg>
<svg style="position:absolute;left:187px;top:387px;" width="8" height="8" viewBox="0 0 8 8"><path d="M7 0 L7 7 L0 7 Z" fill="#d8d8d8"/></svg>
<svg style="position:absolute;left:148px;top:400px;" width="48" height="48" viewBox="0 0 48 48"><defs><linearGradient id="ig" x1="0" y1="0" x2="0" y2="1"><stop offset="0" stop-color="#e4e4e4"/><stop offset="1" stop-color="#a8a8a8"/></linearGradient></defs><circle cx="15" cy="23.6" r="9.5" fill="none" stroke="#e0e0e0" stroke-width="2.2" stroke-dasharray="1.8,2.4"/><path d="M41 12 L27 25 L30 28 L43 14 Z" fill="#cfcfcf"/><path d="M27 24 Q18 26 12 32 Q22 34 30 29 Z" fill="url(#ig)"/></svg>
<svg style="position:absolute;left:187px;top:439px;" width="8" height="8" viewBox="0 0 8 8"><path d="M7 0 L7 7 L0 7 Z" fill="#d8d8d8"/></svg>
<svg style="position:absolute;left:148px;top:452px;" width="48" height="48" viewBox="0 0 48 48"><defs><linearGradient id="ig" x1="0" y1="0" x2="0" y2="1"><stop offset="0" stop-color="#e4e4e4"/><stop offset="1" stop-color="#a8a8a8"/></linearGradient></defs><path d="M14 6 L14 34 L40 34" fill="none" stroke="#d0d0d0" stroke-width="4"/><path d="M6 14 L34 14 L34 42" fill="none" stroke="#d0d0d0" stroke-width="4"/><path d="M14 34 L40 8" stroke="#d0d0d0" stroke-width="1.8"/></svg>
<svg style="position:absolute;left:187px;top:491px;" width="8" height="8" viewBox="0 0 8 8"><path d="M7 0 L7 7 L0 7 Z" fill="#d8d8d8"/></svg>
<svg style="position:absolute;left:148px;top:504px;" width="48" height="48" viewBox="0 0 48 48"><defs><linearGradient id="ig" x1="0" y1="0" x2="0" y2="1"><stop offset="0" stop-color="#e4e4e4"/><stop offset="1" stop-color="#a8a8a8"/></linearGradient></defs><path d="M8 40 L26 22 L30 26 L12 44 L8 44 Z" fill="none" stroke="#d0d0d0" stroke-width="2"/><path d="M24 18 L34 28 L38 24 L32 18 L38 12 Q40 8 36 6 Q32 4 28 10 L22 16 Z" fill="url(#ig)"/></svg>
<svg style="position:absolute;left:187px;top:543px;" width="8" height="8" viewBox="0 0 8 8"><path d="M7 0 L7 7 L0 7 Z" fill="#d8d8d8"/></svg>
<div style="position:absolute;left:142px;top:556px;width:58px;height:2px;background:#3a3a3a;"></div>
<svg style="position:absolute;left:148px;top:561px;" width="48" height="48" viewBox="0 0 48 48"><defs><linearGradient id="ig" x1="0" y1="0" x2="0" y2="1"><stop offset="0" stop-color="#e4e4e4"/><stop offset="1" stop-color="#a8a8a8"/></linearGradient></defs><circle cx="14" cy="20" r="10" fill="none" stroke="#d8d8d8" stroke-width="2" stroke-dasharray="2,2.5"/><path d="M10 34 L32 10 Q38 6 42 12 Q44 16 40 20 L18 42 Q12 46 8 42 Q6 38 10 34 Z" fill="url(#ig)"/><g fill="#555"><circle cx="22" cy="28" r="1.6"/><circle cx="27" cy="24" r="1.6"/><circle cx="26" cy="30" r="1.6"/><circle cx="31" cy="26" r="1.6"/><circle cx="18" cy="34" r="1.6"/><circle cx="34" cy="20" r="1.6"/></g></svg>
<svg style="position:absolute;left:187px;top:600px;" width="8" height="8" viewBox="0 0 8 8"><path d="M7 0 L7 7 L0 7 Z" fill="#d8d8d8"/></svg>
<svg style="position:absolute;left:148px;top:613px;" width="48" height="48" viewBox="0 0 48 48"><defs><linearGradient id="ig" x1="0" y1="0" x2="0" y2="1"><stop offset="0" stop-color="#e4e4e4"/><stop offset="1" stop-color="#a8a8a8"/></linearGradient></defs><path d="M6 42 L10 30 L32 8 Q36 5 40 9 Q43 13 40 16 L18 38 Z" fill="url(#ig)"/><path d="M6 42 L10 30 L18 38 Z" fill="#e8e8e8"/><path d="M10 30 L18 38" stroke="#666" stroke-width="1.5"/></svg>
<svg style="position:absolute;left:187px;top:652px;" width="8" height="8" viewBox="0 0 8 8"><path d="M7 0 L7 7 L0 7 Z" fill="#d8d8d8"/></svg>
<svg style="position:absolute;left:148px;top:666px;" width="48" height="48" viewBox="0 0 48 48"><defs><linearGradient id="ig" x1="0" y1="0" x2="0" y2="1"><stop offset="0" stop-color="#e4e4e4"/><stop offset="1" stop-color="#a8a8a8"/></linearGradient></defs><ellipse cx="24" cy="10" rx="5" ry="6" fill="url(#ig)"/><path d="M21 14 L27 14 L28 24 L20 24 Z" fill="url(#ig)"/><rect x="8" y="24" width="32" height="10" rx="2" fill="url(#ig)"/><rect x="8" y="37" width="32" height="3" fill="#d8d8d8"/></svg>
<svg style="position:absolute;left:187px;top:705px;" width="8" height="8" viewBox="0 0 8 8"><path d="M7 0 L7 7 L0 7 Z" fill="#d8d8d8"/></svg>
<svg style="position:absolute;left:148px;top:717px;" width="48" height="48" viewBox="0 0 48 48"><defs><linearGradient id="ig" x1="0" y1="0" x2="0" y2="1"><stop offset="0" stop-color="#e4e4e4"/><stop offset="1" stop-color="#a8a8a8"/></linearGradient></defs><path d="M8 18 Q14 8 26 12" fill="none" stroke="#d0d0d0" stroke-width="2.4"/><path d="M8 12 L6 20 L14 20 Z" fill="#d0d0d0"/><path d="M42 8 L28 26 Q24 30 8 34 Q22 38 30 32 L44 12 Z" fill="url(#ig)"/><g fill="#d0d0d0"><circle cx="38" cy="30" r="1.3"/><circle cx="35" cy="35" r="1.3"/><circle cx="31" cy="38" r="1.3"/><circle cx="39" cy="24" r="1.3"/></g></svg>
<svg style="position:absolute;left:187px;top:756px;" width="8" height="8" viewBox="0 0 8 8"><path d="M7 0 L7 7 L0 7 Z" fill="#d8d8d8"/></svg>
<svg style="position:absolute;left:148px;top:769px;" width="48" height="48" viewBox="0 0 48 48"><defs><linearGradient id="ig" x1="0" y1="0" x2="0" y2="1"><stop offset="0" stop-color="#e4e4e4"/><stop offset="1" stop-color="#a8a8a8"/></linearGradient></defs><path d="M4 16 L12 14 L14 6 L17 13 L24 10 L19 18 L24 24 L16 21 L12 28 L11 20 Z" fill="#e0e0e0"/><path d="M16 34 L30 20 L44 22 L42 32 L30 44 L16 42 Z" fill="url(#ig)"/><path d="M16 34 L30 34 L44 22 M30 34 L30 44" fill="none" stroke="#777" stroke-width="1.3"/></svg>
<svg style="position:absolute;left:187px;top:808px;" width="8" height="8" viewBox="0 0 8 8"><path d="M7 0 L7 7 L0 7 Z" fill="#d8d8d8"/></svg>
<div style="position:absolute;left:140px;top:823px;width:63px;height:48px;box-sizing:border-box;background:#343434;border:1px solid #2a2a2a;border-radius:5px;box-shadow:0 1px 0 #5e5e5e;"></div>
<svg style="position:absolute;left:153px;top:828px;" width="40" height="42" viewBox="0 0 40 42"><defs><linearGradient id="bkg" x1="0" y1="0" x2="1" y2="1"><stop offset="0" stop-color="#dcdcdc"/><stop offset="1" stop-color="#8e8e8e"/></linearGradient></defs>
    <g transform="scale(1.0)">
    <path d="M13 20 L13 9 Q13 4.5 17 4.5 Q21 4.5 21 9 L21 21" fill="none" stroke="#d0d0d0" stroke-width="2.4"/>
    <g transform="rotate(-28 18 27)">
      <path d="M5 19 L31 19 L28 36 Q18 40 8 36 Z" fill="url(#bkg)"/>
      <ellipse cx="18" cy="19.5" rx="13" ry="3.2" fill="#bcbcbc"/>
      <path d="M9 23 L12 35" stroke="#eeeeee" stroke-width="2" opacity="0.6"/>
    </g>
    <path d="M27 17 Q34 20 35 28 Q35.5 33 32 33.5 Q28.5 33.5 29 29 Q29.5 24 25 21 Z" fill="#c6c6c6"/>
    <path d="M13 20 L13 9 Q13 4.5 17 4.5 Q21 4.5 21 9 L21 24" fill="none" stroke="#d8d8d8" stroke-width="2.4"/>
    </g></svg>
<svg style="position:absolute;left:187px;top:860px;" width="8" height="8" viewBox="0 0 8 8"><path d="M7 0 L7 7 L0 7 Z" fill="#d8d8d8"/></svg>
<svg style="position:absolute;left:148px;top:873px;" width="48" height="48" viewBox="0 0 48 48"><defs><linearGradient id="ig" x1="0" y1="0" x2="0" y2="1"><stop offset="0" stop-color="#e4e4e4"/><stop offset="1" stop-color="#a8a8a8"/></linearGradient></defs><path d="M24 6 Q18 18 14 24 Q10 32 14 38 Q18 44 24 44 Q30 44 34 38 Q38 32 34 24 Q30 18 24 6 Z" fill="url(#ig)"/></svg>
<svg style="position:absolute;left:187px;top:912px;" width="8" height="8" viewBox="0 0 8 8"><path d="M7 0 L7 7 L0 7 Z" fill="#d8d8d8"/></svg>
<svg style="position:absolute;left:148px;top:925px;" width="48" height="48" viewBox="0 0 48 48"><defs><linearGradient id="ig" x1="0" y1="0" x2="0" y2="1"><stop offset="0" stop-color="#e4e4e4"/><stop offset="1" stop-color="#a8a8a8"/></linearGradient></defs><path d="M4 18 Q6 8 18 8 Q28 8 38 14 Q44 18 42 26 L40 38 L30 34 Q24 40 16 38 Q6 34 4 18 Z" fill="url(#ig)"/><ellipse cx="15" cy="22" rx="5" ry="5" fill="#535353"/></svg>
<svg style="position:absolute;left:187px;top:964px;" width="8" height="8" viewBox="0 0 8 8"><path d="M7 0 L7 7 L0 7 Z" fill="#d8d8d8"/></svg>
<div style="position:absolute;left:142px;top:978px;width:58px;height:2px;background:#3a3a3a;"></div>
<svg style="position:absolute;left:148px;top:984px;" width="48" height="48" viewBox="0 0 48 48"><defs><linearGradient id="ig" x1="0" y1="0" x2="0" y2="1"><stop offset="0" stop-color="#e4e4e4"/><stop offset="1" stop-color="#a8a8a8"/></linearGradient></defs><path d="M6 42 L12 24 L24 14 L34 24 L24 36 Z" fill="url(#ig)"/><path d="M6 42 L20 28" stroke="#555" stroke-width="1.5"/><circle cx="19" cy="29" r="2" fill="#555"/><path d="M26 12 L32 6 L42 16 L36 22 Z" fill="#d8d8d8"/></svg>
<svg style="position:absolute;left:187px;top:1023px;" width="8" height="8" viewBox="0 0 8 8"><path d="M7 0 L7 7 L0 7 Z" fill="#d8d8d8"/></svg>
<svg style="position:absolute;left:148px;top:1034px;" width="48" height="48" viewBox="0 0 48 48"><defs><linearGradient id="ig" x1="0" y1="0" x2="0" y2="1"><stop offset="0" stop-color="#e4e4e4"/><stop offset="1" stop-color="#a8a8a8"/></linearGradient></defs><path d="M8 10 L40 10 L40 17 L37 17 Q36 13 33 13 L27 13 L27 38 L31 38 L31 40 L17 40 L17 38 L21 38 L21 13 L15 13 Q12 13 11 17 L8 17 Z" fill="url(#ig)"/></svg>
<svg style="position:absolute;left:187px;top:1073px;" width="8" height="8" viewBox="0 0 8 8"><path d="M7 0 L7 7 L0 7 Z" fill="#d8d8d8"/></svg>
<svg style="position:absolute;left:148px;top:1087px;" width="48" height="48" viewBox="0 0 48 48"><defs><linearGradient id="ig" x1="0" y1="0" x2="0" y2="1"><stop offset="0" stop-color="#e4e4e4"/><stop offset="1" stop-color="#a8a8a8"/></linearGradient></defs><path d="M12 6 L12 38 L20 30 L26 42 L31 40 L25 28 L36 28 Z" fill="#2a2a2a" stroke="#d8d8d8" stroke-width="2.2" stroke-linejoin="round"/></svg>
<svg style="position:absolute;left:187px;top:1126px;" width="8" height="8" viewBox="0 0 8 8"><path d="M7 0 L7 7 L0 7 Z" fill="#d8d8d8"/></svg>
<svg style="position:absolute;left:148px;top:1138px;" width="48" height="48" viewBox="0 0 48 48"><defs><linearGradient id="ig" x1="0" y1="0" x2="0" y2="1"><stop offset="0" stop-color="#e4e4e4"/><stop offset="1" stop-color="#a8a8a8"/></linearGradient></defs><path d="M8 40 L40 8" stroke="#d8d8d8" stroke-width="2.6"/></svg>
<svg style="position:absolute;left:187px;top:1177px;" width="8" height="8" viewBox="0 0 8 8"><path d="M7 0 L7 7 L0 7 Z" fill="#d8d8d8"/></svg>
<div style="position:absolute;left:142px;top:1192px;width:58px;height:2px;background:#3a3a3a;"></div>
<svg style="position:absolute;left:148px;top:1197px;" width="48" height="48" viewBox="0 0 48 48"><defs><linearGradient id="ig" x1="0" y1="0" x2="0" y2="1"><stop offset="0" stop-color="#e4e4e4"/><stop offset="1" stop-color="#a8a8a8"/></linearGradient></defs><path d="M14 40 Q8 32 4 26 Q2 22 6 22 Q10 22 14 28 L14 10 Q14 7 17 7 Q20 7 20 10 L20 22 L20 6 Q20 3 23.5 3 Q27 3 27 6 L27 22 L27 8 Q27 5 30 5 Q33 5 33 8 L33 22 L33 12 Q33 9 36 9 Q39 9 39 12 L39 30 Q39 38 34 42 Z" fill="url(#ig)"/></svg>
<svg style="position:absolute;left:187px;top:1236px;" width="8" height="8" viewBox="0 0 8 8"><path d="M7 0 L7 7 L0 7 Z" fill="#d8d8d8"/></svg>
<svg style="position:absolute;left:148px;top:1249px;" width="48" height="48" viewBox="0 0 48 48"><defs><linearGradient id="ig" x1="0" y1="0" x2="0" y2="1"><stop offset="0" stop-color="#e4e4e4"/><stop offset="1" stop-color="#a8a8a8"/></linearGradient></defs><circle cx="20" cy="20" r="12" fill="#8a8a8a" stroke="#d0d0d0" stroke-width="3"/><path d="M29 29 L41 41" stroke="#d0d0d0" stroke-width="6" stroke-linecap="round"/></svg>
<svg style="position:absolute;left:140px;top:1305px;" width="22" height="22" viewBox="0 0 22 22"><rect x="6" y="6" width="14" height="14" fill="#c8c8c8" stroke="#b0b0b0"/><rect x="1.5" y="1.5" width="12" height="12" fill="#2d2d2d" stroke="#e0e0e0" stroke-width="2"/></svg>
<svg style="position:absolute;left:175px;top:1302px;" width="24" height="24" viewBox="0 0 24 24"><path d="M4 6 L14 6 Q20 6 20 12 L20 18" fill="none" stroke="#d8d8d8" stroke-width="2.4"/><path d="M1 6 L7 1 L7 11 Z" fill="#d8d8d8"/><path d="M15 17 L25 17 L20 23 Z" fill="#d8d8d8"/></svg>
<div style="position:absolute;left:161px;top:1357px;width:39px;height:39px;box-sizing:border-box;border:1.5px solid #2a2a2a;background:#fff;"></div>
<div style="position:absolute;left:141px;top:1337px;width:39px;height:39px;box-sizing:border-box;border:1.5px solid #2a2a2a;background:#eee2e8;box-shadow:inset 0 0 0 2px #fff;"></div>
<svg style="position:absolute;left:149px;top:1412px;" width="36" height="30" viewBox="0 0 36 30"><rect x="1.5" y="1.5" width="33" height="26" fill="#383838" stroke="#d8d8d8" stroke-width="2.4"/><circle cx="18" cy="14.5" r="9" fill="none" stroke="#e0e0e0" stroke-width="1.8" stroke-dasharray="2,2"/></svg>
<svg style="position:absolute;left:151px;top:1463px;" width="38" height="32" viewBox="0 0 38 32"><rect x="1.5" y="7.5" width="23" height="21" fill="#6a6a6a" stroke="#d8d8d8" stroke-width="2.4"/><rect x="11.5" y="2" width="23" height="19" fill="#7a7a7a" stroke="#d8d8d8" stroke-width="2.4"/></svg>
<svg style="position:absolute;left:187px;top:1496px;" width="8" height="8" viewBox="0 0 8 8"><path d="M7 0 L7 7 L0 7 Z" fill="#d8d8d8"/></svg>
<div style="position:absolute;left:2096px;top:188px;width:518px;height:2px;background:#454545;"></div>
<svg style="position:absolute;left:2148px;top:191px;" width="16" height="14" viewBox="0 0 16 14"><path d="M7 0 L0 7 L7 14 Z" fill="#bdbdbd"/><path d="M15 0 L8 7 L15 14 Z" fill="#bdbdbd"/></svg>
<svg style="position:absolute;left:2587px;top:191px;" width="16" height="14" viewBox="0 0 16 14"><path d="M1 0 L8 7 L1 14 Z" fill="#bdbdbd"/><path d="M9 0 L16 7 L9 14 Z" fill="#bdbdbd"/></svg>
<div style="position:absolute;left:2096px;top:212px;width:74px;height:80px;background:#535353;box-shadow:inset 0 2px 0 #646464;"></div>
<div style="position:absolute;left:2096px;top:292px;width:74px;height:2px;background:#2d2d2d;"></div>
<svg style="position:absolute;left:2114px;top:220px;" width="40" height="8" viewBox="0 0 40 8"><rect x="0.00" y="0" width="1.9" height="7" fill="#262626"/><rect x="3.85" y="0" width="1.9" height="7" fill="#262626"/><rect x="7.70" y="0" width="1.9" height="7" fill="#262626"/><rect x="11.55" y="0" width="1.9" height="7" fill="#262626"/><rect x="15.40" y="0" width="1.9" height="7" fill="#262626"/><rect x="19.25" y="0" width="1.9" height="7" fill="#262626"/><rect x="23.10" y="0" width="1.9" height="7" fill="#262626"/><rect x="26.95" y="0" width="1.9" height="7" fill="#262626"/><rect x="30.80" y="0" width="1.9" height="7" fill="#262626"/><rect x="34.65" y="0" width="1.9" height="7" fill="#262626"/></svg>
<div style="position:absolute;left:2096px;top:294px;width:74px;height:136px;background:#535353;box-shadow:inset 0 2px 0 #646464;"></div>
<div style="position:absolute;left:2096px;top:430px;width:74px;height:2px;background:#2d2d2d;"></div>
<svg style="position:absolute;left:2114px;top:302px;" width="40" height="8" viewBox="0 0 40 8"><rect x="0.00" y="0" width="1.9" height="7" fill="#262626"/><rect x="3.85" y="0" width="1.9" height="7" fill="#262626"/><rect x="7.70" y="0" width="1.9" height="7" fill="#262626"/><rect x="11.55" y="0" width="1.9" height="7" fill="#262626"/><rect x="15.40" y="0" width="1.9" height="7" fill="#262626"/><rect x="19.25" y="0" width="1.9" height="7" fill="#262626"/><rect x="23.10" y="0" width="1.9" height="7" fill="#262626"/><rect x="26.95" y="0" width="1.9" height="7" fill="#262626"/><rect x="30.80" y="0" width="1.9" height="7" fill="#262626"/><rect x="34.65" y="0" width="1.9" height="7" fill="#262626"/></svg>
<div style="position:absolute;left:2096px;top:432px;width:74px;height:80px;background:#535353;box-shadow:inset 0 2px 0 #646464;"></div>
<div style="position:absolute;left:2096px;top:512px;width:74px;height:2px;background:#2d2d2d;"></div>
<svg style="position:absolute;left:2114px;top:440px;" width="40" height="8" viewBox="0 0 40 8"><rect x="0.00" y="0" width="1.9" height="7" fill="#262626"/><rect x="3.85" y="0" width="1.9" height="7" fill="#262626"/><rect x="7.70" y="0" width="1.9" height="7" fill="#262626"/><rect x="11.55" y="0" width="1.9" height="7" fill="#262626"/><rect x="15.40" y="0" width="1.9" height="7" fill="#262626"/><rect x="19.25" y="0" width="1.9" height="7" fill="#262626"/><rect x="23.10" y="0" width="1.9" height="7" fill="#262626"/><rect x="26.95" y="0" width="1.9" height="7" fill="#262626"/><rect x="30.80" y="0" width="1.9" height="7" fill="#262626"/><rect x="34.65" y="0" width="1.9" height="7" fill="#262626"/></svg>
<div style="position:absolute;left:2096px;top:514px;width:74px;height:80px;background:#535353;box-shadow:inset 0 2px 0 #646464;"></div>
<div style="position:absolute;left:2096px;top:594px;width:74px;height:2px;background:#2d2d2d;"></div>
<svg style="position:absolute;left:2114px;top:522px;" width="40" height="8" viewBox="0 0 40 8"><rect x="0.00" y="0" width="1.9" height="7" fill="#262626"/><rect x="3.85" y="0" width="1.9" height="7" fill="#262626"/><rect x="7.70" y="0" width="1.9" height="7" fill="#262626"/><rect x="11.55" y="0" width="1.9" height="7" fill="#262626"/><rect x="15.40" y="0" width="1.9" height="7" fill="#262626"/><rect x="19.25" y="0" width="1.9" height="7" fill="#262626"/><rect x="23.10" y="0" width="1.9" height="7" fill="#262626"/><rect x="26.95" y="0" width="1.9" height="7" fill="#262626"/><rect x="30.80" y="0" width="1.9" height="7" fill="#262626"/><rect x="34.65" y="0" width="1.9" height="7" fill="#262626"/></svg>
<div style="position:absolute;left:2096px;top:596px;width:74px;height:80px;background:#535353;box-shadow:inset 0 2px 0 #646464;"></div>
<div style="position:absolute;left:2096px;top:676px;width:74px;height:2px;background:#2d2d2d;"></div>
<svg style="position:absolute;left:2114px;top:604px;" width="40" height="8" viewBox="0 0 40 8"><rect x="0.00" y="0" width="1.9" height="7" fill="#262626"/><rect x="3.85" y="0" width="1.9" height="7" fill="#262626"/><rect x="7.70" y="0" width="1.9" height="7" fill="#262626"/><rect x="11.55" y="0" width="1.9" height="7" fill="#262626"/><rect x="15.40" y="0" width="1.9" height="7" fill="#262626"/><rect x="19.25" y="0" width="1.9" height="7" fill="#262626"/><rect x="23.10" y="0" width="1.9" height="7" fill="#262626"/><rect x="26.95" y="0" width="1.9" height="7" fill="#262626"/><rect x="30.80" y="0" width="1.9" height="7" fill="#262626"/><rect x="34.65" y="0" width="1.9" height="7" fill="#262626"/></svg>
<div style="position:absolute;left:2096px;top:678px;width:74px;height:892px;background:#535353;box-shadow:inset 0 2px 0 #646464;"></div>
<div style="position:absolute;left:2170px;top:211px;width:6px;height:1359px;background:#2b2b2b;"></div>
<div style="position:absolute;left:2172px;top:213px;width:2px;height:1357px;background:#3a3a3a;"></div>
<svg style="position:absolute;left:2116px;top:236px;" width="40" height="44" viewBox="0 0 40 44"><defs><linearGradient id="ig" x1="0" y1="0" x2="0" y2="1"><stop offset="0" stop-color="#e4e4e4"/><stop offset="1" stop-color="#a8a8a8"/></linearGradient></defs><rect x="7" y="3" width="10" height="10" fill="#3e3e3e" stroke="#d0d0d0" stroke-width="2.2"/><rect x="7" y="15" width="10" height="10" fill="#3e3e3e" stroke="#d0d0d0" stroke-width="2.2"/><rect x="6" y="28" width="12" height="13" fill="url(#ig)"/><path d="M22 8 L34 8 L30 13 Q38 22 32 32 Q28 38 22 40 Q30 32 28 22 Q26 16 25 14 L22 18 Z" fill="url(#ig)"/></svg>
<svg style="position:absolute;left:2114px;top:320px;" width="44" height="42" viewBox="0 0 44 42"><defs><linearGradient id="ig" x1="0" y1="0" x2="0" y2="1"><stop offset="0" stop-color="#e4e4e4"/><stop offset="1" stop-color="#a8a8a8"/></linearGradient></defs><path d="M4 12 L14 6 L24 12 L24 24 L14 30 L4 24 Z" fill="#a8a8a8" stroke="#d8d8d8" stroke-width="1.6"/><path d="M4 12 L14 18 L24 12 M14 18 L14 30" fill="none" stroke="#e8e8e8" stroke-width="1.6"/><rect x="28" y="5" width="8" height="8" fill="#cfcfcf"/><rect x="28" y="15" width="8" height="8" fill="#cfcfcf"/><rect x="28" y="25" width="8" height="8" fill="#cfcfcf"/><rect x="6" y="34" width="30" height="8" fill="url(#ig)"/><path d="M28 36 L33 36 L30.5 39 Z" fill="#333"/></svg>
<svg style="position:absolute;left:2118px;top:380px;" width="34" height="34" viewBox="0 0 34 34"><defs><linearGradient id="ig" x1="0" y1="0" x2="0" y2="1"><stop offset="0" stop-color="#e4e4e4"/><stop offset="1" stop-color="#a8a8a8"/></linearGradient></defs><circle cx="17" cy="17" r="16" fill="url(#ig)"/><circle cx="17" cy="9.5" r="3" fill="#3a3a3a"/><rect x="14.5" y="15" width="5" height="12" fill="#3a3a3a"/></svg>
<svg style="position:absolute;left:2114px;top:458px;" width="40" height="42" viewBox="0 0 40 42"><defs><linearGradient id="ig" x1="0" y1="0" x2="0" y2="1"><stop offset="0" stop-color="#e4e4e4"/><stop offset="1" stop-color="#a8a8a8"/></linearGradient></defs><path d="M8 10 Q6 2 10 2 Q14 6 12 14 Z" fill="url(#ig)"/><path d="M17 4 L23 4 L22 18 L18 18 Z" fill="url(#ig)"/><path d="M26 10 Q34 6 36 12 Q32 16 26 16 Z" fill="url(#ig)"/><rect x="11" y="20" width="16" height="18" fill="url(#ig)"/><path d="M12 14 L16 20 M20 18 L20 20 M28 14 L24 20" stroke="#cfcfcf" stroke-width="2"/></svg>
<svg style="position:absolute;left:2114px;top:540px;" width="40" height="40" viewBox="0 0 40 40"><defs><linearGradient id="ig" x1="0" y1="0" x2="0" y2="1"><stop offset="0" stop-color="#e4e4e4"/><stop offset="1" stop-color="#a8a8a8"/></linearGradient></defs><rect x="2" y="2" width="4" height="4" fill="#d8d8d8"/><rect x="8" y="2" width="10" height="4" fill="#d8d8d8"/><rect x="2" y="8" width="4" height="4" fill="#d8d8d8"/><rect x="8" y="8" width="10" height="4" fill="#d8d8d8"/><rect x="2" y="14" width="4" height="4" fill="#d8d8d8"/><rect x="8" y="14" width="10" height="4" fill="#d8d8d8"/><rect x="2" y="20" width="4" height="4" fill="#d8d8d8"/><rect x="8" y="20" width="10" height="4" fill="#d8d8d8"/><ellipse cx="27" cy="8" rx="5" ry="6" fill="url(#ig)"/><path d="M24 12 L30 12 L31 22 L23 22 Z" fill="url(#ig)"/><rect x="12" y="22" width="30" height="12" rx="2" fill="url(#ig)"/><rect x="13" y="36" width="28" height="2.5" fill="#d8d8d8"/></svg>
<svg style="position:absolute;left:2114px;top:622px;" width="42" height="40" viewBox="0 0 42 40"><defs><linearGradient id="ig" x1="0" y1="0" x2="0" y2="1"><stop offset="0" stop-color="#e4e4e4"/><stop offset="1" stop-color="#a8a8a8"/></linearGradient></defs><path d="M30 2 L36 8 L12 32 Q8 36 6 34 Q4 32 8 28 Z" fill="url(#ig)"/><path d="M4 6 Q6 0 12 2 L14 6 L12 10 L20 18 L16 22 L8 14 L4 14 Q0 10 4 6 Z" fill="url(#ig)"/><circle cx="32" cy="32" r="5" fill="none" stroke="#cfcfcf" stroke-width="3"/><path d="M20 20 L29 29" stroke="#cfcfcf" stroke-width="3"/></svg>
<div style="position:absolute;left:2175px;top:211px;width:439px;height:35px;background:#3a3a3a;"></div>
<div style="position:absolute;left:2175px;top:211px;width:77px;height:36px;background:#535353;box-shadow:inset 0 2px 0 #626262;"></div>
<div style="position:absolute;left:2190px;top:219.2px;font-size:18.7px;line-height:18.7px;font-weight:700;color:#f2f2f2;white-space:pre;">Color</div>
<div style="position:absolute;left:2252px;top:211px;width:113px;height:35px;background:#3e3e3e;border-left:1.5px solid #2c2c2c;box-sizing:border-box;box-shadow:inset 0 1px 0 #484848;"></div>
<div style="position:absolute;left:2266px;top:219.2px;font-size:18.7px;line-height:18.7px;font-weight:700;color:#b4b4b4;white-space:pre;">Swatches</div>
<div style="position:absolute;left:2365px;top:211px;width:118px;height:35px;background:#3e3e3e;border-left:1.5px solid #2c2c2c;box-sizing:border-box;box-shadow:inset 0 1px 0 #484848;"></div>
<div style="position:absolute;left:2380px;top:219.2px;font-size:18.7px;line-height:18.7px;font-weight:700;color:#b4b4b4;white-space:pre;">Navigator</div>
<div style="position:absolute;left:2483px;top:211px;width:2px;height:35px;background:#2c2c2c;"></div>
<div style="position:absolute;left:2252px;top:246px;width:362px;height:1px;background:#5c5c5c;"></div>
<svg style="position:absolute;left:2575px;top:220px;" width="30" height="18" viewBox="0 0 30 18"><path d="M0 4 L9 4 L4.5 9 Z" fill="#d8d8d8"/><rect x="11" y="1" width="18" height="2.2" fill="#d8d8d8"/><rect x="11" y="5" width="18" height="2.2" fill="#d8d8d8"/><rect x="11" y="9" width="18" height="2.2" fill="#d8d8d8"/><rect x="11" y="13" width="18" height="2.2" fill="#d8d8d8"/></svg>
<div style="position:absolute;left:2175px;top:246px;width:439px;height:192px;background:#535353;"></div>
<div style="position:absolute;left:2206px;top:282px;width:40px;height:40px;box-sizing:border-box;background:#fff;border:1.5px solid #2a2a2a;"></div>
<div style="position:absolute;left:2184px;top:260px;width:44px;height:44px;box-sizing:border-box;border:2px solid #7a7a7a;background:#2a2a2a;"></div>
<div style="position:absolute;left:2186px;top:262px;width:40px;height:40px;box-sizing:border-box;border:2px solid #1e1e1e;background:#eee2e8;box-shadow:inset 0 0 0 2px #fff;"></div>
<div style="position:absolute;left:2262px;top:267.5px;font-size:19.5px;line-height:19.5px;font-weight:400;color:#f4f4f4;white-space:pre;">R</div>
<div style="position:absolute;left:2288px;top:260px;width:179px;height:12px;box-sizing:border-box;border:1.5px solid #8a8a8a;background:#7a7a7a;"></div>
<div style="position:absolute;left:2290px;top:262px;width:175px;height:8px;background:linear-gradient(90deg,#27e0e8,#f0e2e8);"></div>
<svg style="position:absolute;left:2441px;top:273px;" width="22" height="18" viewBox="0 0 22 18"><defs><linearGradient id="ig" x1="0" y1="0" x2="0" y2="1"><stop offset="0" stop-color="#e4e4e4"/><stop offset="1" stop-color="#a8a8a8"/></linearGradient></defs><path d="M11 1 L20 9 Q21 11 21 13 L21 15 Q21 17 19 17 L3 17 Q1 17 1 15 L1 13 Q1 11 2 9 Z" fill="url(#ig)" stroke="#2a2a2a" stroke-width="1.4"/></svg>
<div style="position:absolute;left:2477px;top:260px;width:74px;height:34px;border-radius:4px;background:#5d5d5d;"></div>
<div style="position:absolute;left:2478px;top:261px;width:72px;height:32px;box-sizing:border-box;border:1.5px solid #262626;background:#383838;border-radius:3px;"></div>
<div style="position:absolute;left:2487px;top:267.2px;font-size:19.8px;line-height:19.8px;font-weight:400;color:#f0f0f0;white-space:pre;">238</div>
<div style="position:absolute;left:2262px;top:313.5px;font-size:19.5px;line-height:19.5px;font-weight:400;color:#f4f4f4;white-space:pre;">G</div>
<div style="position:absolute;left:2288px;top:306px;width:179px;height:12px;box-sizing:border-box;border:1.5px solid #8a8a8a;background:#7a7a7a;"></div>
<div style="position:absolute;left:2290px;top:308px;width:175px;height:8px;background:linear-gradient(90deg,#e92ee6,#eef8ee);"></div>
<svg style="position:absolute;left:2433px;top:319px;" width="22" height="18" viewBox="0 0 22 18"><defs><linearGradient id="ig" x1="0" y1="0" x2="0" y2="1"><stop offset="0" stop-color="#e4e4e4"/><stop offset="1" stop-color="#a8a8a8"/></linearGradient></defs><path d="M11 1 L20 9 Q21 11 21 13 L21 15 Q21 17 19 17 L3 17 Q1 17 1 15 L1 13 Q1 11 2 9 Z" fill="url(#ig)" stroke="#2a2a2a" stroke-width="1.4"/></svg>
<div style="position:absolute;left:2477px;top:306px;width:74px;height:34px;border-radius:4px;background:#5d5d5d;"></div>
<div style="position:absolute;left:2478px;top:307px;width:72px;height:32px;box-sizing:border-box;border:1.5px solid #262626;background:#383838;border-radius:3px;"></div>
<div style="position:absolute;left:2487px;top:313.2px;font-size:19.8px;line-height:19.8px;font-weight:400;color:#f0f0f0;white-space:pre;">226</div>
<div style="position:absolute;left:2262px;top:359.5px;font-size:19.5px;line-height:19.5px;font-weight:400;color:#f4f4f4;white-space:pre;">B</div>
<div style="position:absolute;left:2288px;top:352px;width:179px;height:12px;box-sizing:border-box;border:1.5px solid #8a8a8a;background:#7a7a7a;"></div>
<div style="position:absolute;left:2290px;top:354px;width:175px;height:8px;background:linear-gradient(90deg,#e8e03a,#eee2f8);"></div>
<svg style="position:absolute;left:2438px;top:365px;" width="22" height="18" viewBox="0 0 22 18"><defs><linearGradient id="ig" x1="0" y1="0" x2="0" y2="1"><stop offset="0" stop-color="#e4e4e4"/><stop offset="1" stop-color="#a8a8a8"/></linearGradient></defs><path d="M11 1 L20 9 Q21 11 21 13 L21 15 Q21 17 19 17 L3 17 Q1 17 1 15 L1 13 Q1 11 2 9 Z" fill="url(#ig)" stroke="#2a2a2a" stroke-width="1.4"/></svg>
<div style="position:absolute;left:2477px;top:352px;width:74px;height:34px;border-radius:4px;background:#5d5d5d;"></div>
<div style="position:absolute;left:2478px;top:353px;width:72px;height:32px;box-sizing:border-box;border:1.5px solid #262626;background:#383838;border-radius:3px;"></div>
<div style="position:absolute;left:2487px;top:359.2px;font-size:19.8px;line-height:19.8px;font-weight:400;color:#f0f0f0;white-space:pre;">232</div>
<div style="position:absolute;left:2181px;top:400px;width:401px;height:33px;background:#6a6a6a;"></div>
<div style="position:absolute;left:2183px;top:402px;width:380px;height:29px;background:linear-gradient(90deg,#ff0000 0%,#ffff00 17%,#00a650 33%,#00bfff 50%,#1a1aa0 66%,#e0107a 83%,#ff0000 100%);"></div>
<div style="position:absolute;left:2183px;top:402px;width:380px;height:29px;background:linear-gradient(rgba(255,255,255,0.95),rgba(255,255,255,0) 48%,rgba(0,0,0,0) 52%,rgba(0,0,0,0.95));"></div>
<div style="position:absolute;left:2563px;top:402px;width:17px;height:14px;background:#fff;"></div>
<div style="position:absolute;left:2563px;top:416px;width:17px;height:15px;background:#000;"></div>
<div style="position:absolute;left:2175px;top:438px;width:439px;height:5px;background:#2b2b2b;"></div>
<div style="position:absolute;left:2175px;top:443px;width:439px;height:35px;background:#3a3a3a;"></div>
<div style="position:absolute;left:2175px;top:443px;width:155px;height:36px;background:#535353;box-shadow:inset 0 2px 0 #626262;"></div>
<div style="position:absolute;left:2190px;top:451.2px;font-size:18.7px;line-height:18.7px;font-weight:700;color:#f2f2f2;white-space:pre;">Brush Presets</div>
<div style="position:absolute;left:2330px;top:443px;width:2px;height:35px;background:#2c2c2c;"></div>
<div style="position:absolute;left:2330px;top:478px;width:284px;height:1px;background:#5c5c5c;"></div>
<svg style="position:absolute;left:2575px;top:452px;" width="30" height="18" viewBox="0 0 30 18"><path d="M0 4 L9 4 L4.5 9 Z" fill="#d8d8d8"/><rect x="11" y="1" width="18" height="2.2" fill="#d8d8d8"/><rect x="11" y="5" width="18" height="2.2" fill="#d8d8d8"/><rect x="11" y="9" width="18" height="2.2" fill="#d8d8d8"/><rect x="11" y="13" width="18" height="2.2" fill="#d8d8d8"/></svg>
<div style="position:absolute;left:2175px;top:478px;width:439px;height:544px;background:#535353;"></div>
<div style="position:absolute;left:2186.5px;top:497.5px;font-size:18.3px;line-height:18.3px;font-weight:400;color:#b8b8b8;white-space:pre;">Size:</div>
<div style="position:absolute;left:2386px;top:486px;width:141px;height:34px;box-sizing:border-box;border:1.5px solid #464646;background:#4d4d4d;"></div>
<div style="position:absolute;left:2193px;top:540px;width:330px;height:12px;box-sizing:border-box;border:1.5px solid #5e5e5e;border-radius:6px;background:#2f2f2f;box-shadow:inset 0 0 0 1.5px #1f1f1f;"></div>
<svg style="position:absolute;left:2555px;top:506px;" width="34" height="36" viewBox="0 0 34 36"><defs><linearGradient id="ig" x1="0" y1="0" x2="0" y2="1"><stop offset="0" stop-color="#e4e4e4"/><stop offset="1" stop-color="#a8a8a8"/></linearGradient></defs><path d="M1 6 L12 6 L15 9 L33 9 L33 35 L1 35 Z" fill="url(#ig)"/><path d="M1 6 L12 6 L15 9 L33 9 L33 11 L1 11 Z" fill="#3a3a3a"/><path d="M9 16 Q6 22 10 24 L12 22 Z M16 13 L18 13 L18 24 L16 24 Z M22 16 Q28 14 28 20 L23 22 Z" fill="#2e2e2e"/><rect x="11" y="24" width="12" height="7" fill="none" stroke="#2e2e2e" stroke-width="2"/></svg>
<div style="position:absolute;left:2175px;top:569px;width:439px;height:4px;background:#3a3a3a;"></div>
<div style="position:absolute;left:2180px;top:573px;width:397px;height:406px;background:#4a4a4a;"></div>
<div style="position:absolute;left:2577px;top:573px;width:34px;height:406px;background:#3e3e3e;"></div>
<div style="position:absolute;left:2244px;top:573px;width:317px;height:406px;background:#4f4f4f;"></div>
<div style="position:absolute;left:2561px;top:573px;width:16px;height:406px;background:#525252;"></div>
<div style="position:absolute;left:2577px;top:573px;width:34px;height:406px;background:linear-gradient(90deg,#383838,#444);"></div>
<div style="position:absolute;left:2244px;top:636px;width:317px;height:1px;background:#474747;"></div>
<div style="position:absolute;left:2244px;top:700px;width:317px;height:1px;background:#474747;"></div>
<div style="position:absolute;left:2244px;top:764px;width:317px;height:1px;background:#474747;"></div>
<div style="position:absolute;left:2244px;top:828px;width:317px;height:1px;background:#474747;"></div>
<div style="position:absolute;left:2244px;top:892px;width:317px;height:1px;background:#474747;"></div>
<div style="position:absolute;left:2244px;top:956px;width:317px;height:1px;background:#474747;"></div>
<svg style="position:absolute;left:0;top:0" width="2746" height="1750" viewBox="0 0 2746 1750">
    <defs><filter id="bl4" filterUnits="userSpaceOnUse" x="2180" y="560" width="420" height="440"><feGaussianBlur stdDeviation="4"/></filter>
    <filter id="bl2" filterUnits="userSpaceOnUse" x="2180" y="560" width="420" height="440"><feGaussianBlur stdDeviation="2.2"/></filter>
    <filter id="bl1" x="-20%" y="-50%" width="140%" height="200%"><feGaussianBlur stdDeviation="1"/></filter></defs>
    <g fill="none" stroke="#7e7e7e" stroke-linecap="round">
      <path d="M2262 605 C 2315 585, 2400 588, 2452 609 C 2495 622, 2530 607, 2544 604" stroke-width="22" filter="url(#bl4)"/>
      <path d="M2262 669 C 2315 649, 2400 652, 2452 673 C 2495 686, 2530 671, 2544 668" stroke-width="28"/>
    </g>
    <g fill="#7e7e7e">
      <path d="M2265 734 C 2320 709.0, 2400 707.6, 2452 730.0 C 2495 744.8, 2525 738, 2537 735 C 2520 745.2, 2495 759.0, 2452 747.0 C 2400 729.0, 2320 728, 2265 734 Z" filter="url(#bl2)"/>
      <path d="M2265 798 C 2320 771.0, 2400 769.2, 2452 792.0 C 2495 807.6, 2525 802, 2537 799 C 2520 810.4, 2495 825.0, 2452 813.0 C 2400 795.0, 2320 792, 2265 798 Z"/>
    </g>
    <g fill="none" stroke="#7a7a7a" stroke-linecap="round">
      <path d="M2262 861 C 2315 841, 2400 844, 2452 865 C 2495 878, 2530 863, 2544 860" stroke-width="20" filter="url(#bl4)"/>
      <path d="M2262 925 C 2315 905, 2400 908, 2452 929 C 2495 942, 2530 927, 2544 924" stroke-width="26" filter="url(#bl2)"/>
    </g>
    <path d="M2300 978 Q 2340 970 2380 978 Z" fill="#7e7e7e"/>
    <defs><radialGradient id="sdot"><stop offset="0" stop-color="#7e7e7e"/><stop offset="0.45" stop-color="#666"/><stop offset="1" stop-color="#4a4a4a" stop-opacity="0"/></radialGradient></defs>
    <circle cx="2208" cy="604" r="16" fill="url(#sdot)"/>
    <circle cx="2208" cy="668" r="14" fill="#7e7e7e"/>
    <circle cx="2208" cy="732" r="16" fill="url(#sdot)"/>
    <circle cx="2208" cy="796" r="14" fill="#7e7e7e"/>
    <circle cx="2208" cy="860" r="16" fill="url(#sdot)"/>
    <circle cx="2208" cy="924" r="14" fill="#7e7e7e"/>
    </svg>
<div style="position:absolute;left:2175px;top:979px;width:439px;height:6px;background:#3a3a3a;"></div>
<div style="position:absolute;left:2175px;top:985px;width:439px;height:37px;background:#535353;box-shadow:inset 0 1.5px 0 #636363;"></div>
<svg style="position:absolute;left:2344px;top:990px;" width="36" height="28" viewBox="0 0 36 28"><defs><linearGradient id="ig" x1="0" y1="0" x2="0" y2="1"><stop offset="0" stop-color="#e4e4e4"/><stop offset="1" stop-color="#a8a8a8"/></linearGradient></defs><path d="M2 12 Q10 4 18 12 Q10 20 2 12 Z" fill="none" stroke="#9a9a9a" stroke-width="2"/><circle cx="10" cy="12" r="3.5" fill="#9a9a9a"/><path d="M34 2 L22 16 Q18 20 14 24 Q22 24 24 18 L36 4 Z" fill="#9a9a9a"/></svg>
<svg style="position:absolute;left:2408px;top:992px;" width="26" height="24" viewBox="0 0 26 24"><rect x="1" y="1" width="24" height="22" fill="#d0d0d0"/><g fill="#333"><rect x="4" y="6" width="5" height="4"/><rect x="11" y="6" width="5" height="4"/><rect x="18" y="6" width="4" height="4"/><rect x="4" y="12" width="10" height="4"/><path d="M16 16 L22 12 L22 16 Z"/></g></svg>
<svg style="position:absolute;left:2473px;top:992px;" width="22" height="24" viewBox="0 0 22 24"><path d="M6 1 L21 1 L21 22 L6 22 Z" fill="#9a9a9a"/><path d="M1 16 L6 16 L6 22 Z" fill="#9a9a9a"/></svg>
<svg style="position:absolute;left:2530px;top:990px;" width="24" height="28" viewBox="0 0 24 28"><path d="M3 7 L21 7 M9 7 L9 3 L15 3 L15 7" fill="none" stroke="#9a9a9a" stroke-width="2"/><path d="M5 10 L19 10 L18 26 L6 26 Z" fill="none" stroke="#9a9a9a" stroke-width="2"/><path d="M9.5 12 L9.5 24 M12 12 L12 24 M14.5 12 L14.5 24" stroke="#9a9a9a" stroke-width="1.5"/></svg>
<svg style="position:absolute;left:2588px;top:998px;" width="20" height="20" viewBox="0 0 20 20"><rect x="15.2" y="15.2" width="1.6" height="1.6" fill="#2a2a2a"/><rect x="12.4" y="12.4" width="1.6" height="1.6" fill="#2a2a2a"/><rect x="15.2" y="12.4" width="1.6" height="1.6" fill="#2a2a2a"/><rect x="9.6" y="9.6" width="1.6" height="1.6" fill="#2a2a2a"/><rect x="12.4" y="9.6" width="1.6" height="1.6" fill="#2a2a2a"/><rect x="15.2" y="9.6" width="1.6" height="1.6" fill="#2a2a2a"/><rect x="6.8" y="6.8" width="1.6" height="1.6" fill="#2a2a2a"/><rect x="9.6" y="6.8" width="1.6" height="1.6" fill="#2a2a2a"/><rect x="12.4" y="6.8" width="1.6" height="1.6" fill="#2a2a2a"/><rect x="15.2" y="6.8" width="1.6" height="1.6" fill="#2a2a2a"/><rect x="4.0" y="4.0" width="1.6" height="1.6" fill="#2a2a2a"/><rect x="6.8" y="4.0" width="1.6" height="1.6" fill="#2a2a2a"/><rect x="9.6" y="4.0" width="1.6" height="1.6" fill="#2a2a2a"/><rect x="12.4" y="4.0" width="1.6" height="1.6" fill="#2a2a2a"/><rect x="15.2" y="4.0" width="1.6" height="1.6" fill="#2a2a2a"/><rect x="1.2" y="1.2" width="1.6" height="1.6" fill="#2a2a2a"/><rect x="4.0" y="1.2" width="1.6" height="1.6" fill="#2a2a2a"/><rect x="6.8" y="1.2" width="1.6" height="1.6" fill="#2a2a2a"/><rect x="9.6" y="1.2" width="1.6" height="1.6" fill="#2a2a2a"/><rect x="12.4" y="1.2" width="1.6" height="1.6" fill="#2a2a2a"/><rect x="15.2" y="1.2" width="1.6" height="1.6" fill="#2a2a2a"/></svg>
<div style="position:absolute;left:2175px;top:1022px;width:439px;height:5px;background:#2b2b2b;"></div>
<div style="position:absolute;left:2175px;top:1027px;width:439px;height:35px;background:#3a3a3a;"></div>
<div style="position:absolute;left:2175px;top:1027px;width:87px;height:36px;background:#535353;box-shadow:inset 0 2px 0 #626262;"></div>
<div style="position:absolute;left:2190px;top:1035.2px;font-size:18.7px;line-height:18.7px;font-weight:700;color:#f2f2f2;white-space:pre;">Layers</div>
<div style="position:absolute;left:2262px;top:1027px;width:113px;height:35px;background:#3e3e3e;border-left:1.5px solid #2c2c2c;box-sizing:border-box;box-shadow:inset 0 1px 0 #484848;"></div>
<div style="position:absolute;left:2276px;top:1035.2px;font-size:18.7px;line-height:18.7px;font-weight:700;color:#b4b4b4;white-space:pre;">Channels</div>
<div style="position:absolute;left:2375px;top:1027px;width:78px;height:35px;background:#3e3e3e;border-left:1.5px solid #2c2c2c;box-sizing:border-box;box-shadow:inset 0 1px 0 #484848;"></div>
<div style="position:absolute;left:2391px;top:1035.2px;font-size:18.7px;line-height:18.7px;font-weight:700;color:#b4b4b4;white-space:pre;">Paths</div>
<div style="position:absolute;left:2453px;top:1027px;width:2px;height:35px;background:#2c2c2c;"></div>
<div style="position:absolute;left:2262px;top:1062px;width:352px;height:1px;background:#5c5c5c;"></div>
<svg style="position:absolute;left:2575px;top:1036px;" width="30" height="18" viewBox="0 0 30 18"><path d="M0 4 L9 4 L4.5 9 Z" fill="#d8d8d8"/><rect x="11" y="1" width="18" height="2.2" fill="#d8d8d8"/><rect x="11" y="5" width="18" height="2.2" fill="#d8d8d8"/><rect x="11" y="9" width="18" height="2.2" fill="#d8d8d8"/><rect x="11" y="13" width="18" height="2.2" fill="#d8d8d8"/></svg>
<div style="position:absolute;left:2175px;top:1062px;width:439px;height:508px;background:#535353;"></div>
<div style="position:absolute;left:2184px;top:1072px;width:128px;height:35px;border-radius:7px;background:rgba(255,255,255,0.06);"></div>
<div style="position:absolute;left:2185px;top:1073px;width:126px;height:32px;box-sizing:border-box;border:1.6px solid #232323;border-radius:6px;background:linear-gradient(#6c6c6c,#5a5a5a 55%,#535353);box-shadow:inset 0 1px 0 #7b7b7b;"></div>
<div style="position:absolute;left:2226px;top:1079.7px;font-size:19.3px;line-height:19.3px;font-weight:400;color:#f4f4f4;white-space:pre;">Kind</div>
<svg style="position:absolute;left:2290px;top:1079.0px;" width="12" height="20" viewBox="0 0 12 20"><path d="M1 8 L6 1.5 L11 8 Z" fill="#e0e0e0"/><path d="M1 12 L6 18.5 L11 12 Z" fill="#e0e0e0"/><rect x="1" y="9" width="10" height="2" fill="#2a2a2a"/></svg>
<svg style="position:absolute;left:2196px;top:1078px;" width="24" height="24" viewBox="0 0 24 24"><circle cx="13" cy="10" r="7" fill="none" stroke="#e6e6e6" stroke-width="2.4"/><path d="M8 15 L2 21" stroke="#e6e6e6" stroke-width="3" stroke-linecap="round"/></svg>
<svg style="position:absolute;left:2334px;top:1077px;" width="28" height="24" viewBox="0 0 28 24"><defs><linearGradient id="ig" x1="0" y1="0" x2="0" y2="1"><stop offset="0" stop-color="#e4e4e4"/><stop offset="1" stop-color="#a8a8a8"/></linearGradient></defs><rect x="1.5" y="1.5" width="24" height="20" fill="none" stroke="#cfcfcf" stroke-width="2.2"/><path d="M4 19 L10 12 L14 16 L18 11 L23 19 Z" fill="#cfcfcf"/><circle cx="18" cy="7" r="2.5" fill="#cfcfcf"/></svg>
<svg style="position:absolute;left:2383px;top:1078px;" width="24" height="24" viewBox="0 0 24 24"><circle cx="12" cy="12" r="10" fill="#9a9a9a" stroke="#cfcfcf" stroke-width="2"/><path d="M12 2 A10 10 0 0 1 12 22 Z" fill="#bdbdbd"/><path d="M6 18 L18 6" stroke="#444" stroke-width="2.4"/></svg>
<svg style="position:absolute;left:2431px;top:1077px;" width="24" height="24" viewBox="0 0 24 24"><defs><linearGradient id="ig" x1="0" y1="0" x2="0" y2="1"><stop offset="0" stop-color="#e4e4e4"/><stop offset="1" stop-color="#a8a8a8"/></linearGradient></defs><path d="M2 2 L22 2 L22 8 L20 8 Q19 5 17 5 L14 5 L14 20 L17 20 L17 22 L7 22 L7 20 L10 20 L10 5 L7 5 Q5 5 4 8 L2 8 Z" fill="url(#ig)"/></svg>
<svg style="position:absolute;left:2479px;top:1077px;" width="24" height="24" viewBox="0 0 24 24"><rect x="4" y="4" width="16" height="16" fill="none" stroke="#cfcfcf" stroke-width="1.8"/><rect x="1" y="1" width="6" height="6" fill="#535353" stroke="#cfcfcf" stroke-width="1.6"/><rect x="1" y="17" width="6" height="6" fill="#535353" stroke="#cfcfcf" stroke-width="1.6"/><rect x="17" y="1" width="6" height="6" fill="#535353" stroke="#cfcfcf" stroke-width="1.6"/><rect x="17" y="17" width="6" height="6" fill="#535353" stroke="#cfcfcf" stroke-width="1.6"/></svg>
<svg style="position:absolute;left:2527px;top:1077px;" width="24" height="26" viewBox="0 0 24 26"><defs><linearGradient id="ig" x1="0" y1="0" x2="0" y2="1"><stop offset="0" stop-color="#e4e4e4"/><stop offset="1" stop-color="#a8a8a8"/></linearGradient></defs><path d="M9 1 L19 1 L23 5 L23 20 L9 20 Z" fill="#535353" stroke="#cfcfcf" stroke-width="1.8"/><rect x="1" y="12" width="11" height="12" fill="url(#ig)"/></svg>
<div style="position:absolute;left:2577px;top:1073px;width:20px;height:33px;box-sizing:border-box;border:1.5px solid #2a2a2a;background:linear-gradient(#7a7a7a 0%,#6a6a6a 48%,#3b3b3b 50%,#3b3b3b 100%);"></div>
<div style="position:absolute;left:2175px;top:1116px;width:439px;height:2px;background:#3c3c3c;"></div>
<div style="position:absolute;left:2184px;top:1128px;width:225px;height:36px;border-radius:7px;background:rgba(255,255,255,0.06);"></div>
<div style="position:absolute;left:2185px;top:1129px;width:223px;height:33px;box-sizing:border-box;border:1.6px solid #232323;border-radius:6px;background:linear-gradient(#6c6c6c,#5a5a5a 55%,#535353);box-shadow:inset 0 1px 0 #7b7b7b;"></div>
<div style="position:absolute;left:2198px;top:1136.2px;font-size:19.3px;line-height:19.3px;font-weight:400;color:#f4f4f4;white-space:pre;">Normal</div>
<svg style="position:absolute;left:2387px;top:1135.5px;" width="12" height="20" viewBox="0 0 12 20"><path d="M1 8 L6 1.5 L11 8 Z" fill="#e0e0e0"/><path d="M1 12 L6 18.5 L11 12 Z" fill="#e0e0e0"/><rect x="1" y="9" width="10" height="2" fill="#2a2a2a"/></svg>
<div style="position:absolute;left:2416px;top:1138.0px;font-size:19.5px;line-height:19.5px;font-weight:400;color:#f0f0f0;white-space:pre;">Opacity:</div>
<div style="position:absolute;left:2495px;top:1130px;width:101px;height:33px;border-radius:4px;background:#5d5d5d;"></div>
<div style="position:absolute;left:2496px;top:1131px;width:99px;height:31px;box-sizing:border-box;border:1.5px solid #262626;background:#383838;border-radius:3px;"></div>
<div style="position:absolute;left:2564px;top:1131px;width:31px;height:31px;box-sizing:border-box;border:1.5px solid #262626;border-left:none;border-radius:0 4px 4px 0;background:linear-gradient(#686868,#555);"></div>
<svg style="position:absolute;left:2573.5px;top:1142.5px;" width="12" height="8" viewBox="0 0 12 8"><path d="M1 1 L11 1 L6 7 Z" fill="#e6e6e6"/></svg>
<div style="position:absolute;left:2505px;top:1137.2px;font-size:19.3px;line-height:19.3px;font-weight:400;color:#f0f0f0;white-space:pre;">100%</div>
<div style="position:absolute;left:2175px;top:1173px;width:439px;height:2px;background:#3c3c3c;"></div>
<div style="position:absolute;left:2186px;top:1193.7px;font-size:19.3px;line-height:19.3px;font-weight:400;color:#f0f0f0;white-space:pre;">Lock:</div>
<svg style="position:absolute;left:2246px;top:1190px;" width="22" height="24" viewBox="0 0 22 24"><rect x="1" y="1.0" width="5" height="5.5" fill="#cfcfcf"/><rect x="6" y="1.0" width="5" height="5.5" fill="#8a8a8a"/><rect x="11" y="1.0" width="5" height="5.5" fill="#cfcfcf"/><rect x="16" y="1.0" width="5" height="5.5" fill="#8a8a8a"/><rect x="1" y="6.5" width="5" height="5.5" fill="#8a8a8a"/><rect x="6" y="6.5" width="5" height="5.5" fill="#cfcfcf"/><rect x="11" y="6.5" width="5" height="5.5" fill="#8a8a8a"/><rect x="16" y="6.5" width="5" height="5.5" fill="#cfcfcf"/><rect x="1" y="12.0" width="5" height="5.5" fill="#cfcfcf"/><rect x="6" y="12.0" width="5" height="5.5" fill="#8a8a8a"/><rect x="11" y="12.0" width="5" height="5.5" fill="#cfcfcf"/><rect x="16" y="12.0" width="5" height="5.5" fill="#8a8a8a"/><rect x="1" y="17.5" width="5" height="5.5" fill="#8a8a8a"/><rect x="6" y="17.5" width="5" height="5.5" fill="#cfcfcf"/><rect x="11" y="17.5" width="5" height="5.5" fill="#8a8a8a"/><rect x="16" y="17.5" width="5" height="5.5" fill="#cfcfcf"/></svg>
<svg style="position:absolute;left:2286px;top:1186px;" width="32" height="30" viewBox="0 0 32 30"><defs><linearGradient id="ig" x1="0" y1="0" x2="0" y2="1"><stop offset="0" stop-color="#e4e4e4"/><stop offset="1" stop-color="#a8a8a8"/></linearGradient></defs><path d="M30 2 L16 18 Q12 22 4 26 Q14 28 20 22 L32 6 Z" fill="url(#ig)"/></svg>
<svg style="position:absolute;left:2331px;top:1189px;" width="28" height="28" viewBox="0 0 28 28"><path d="M14 1 L19 6 L16 6 L16 12 L22 12 L22 9 L27 14 L22 19 L22 16 L16 16 L16 22 L19 22 L14 27 L9 22 L12 22 L12 16 L6 16 L6 19 L1 14 L6 9 L6 12 L12 12 L12 6 L9 6 Z" fill="none" stroke="#d0d0d0" stroke-width="1.7"/></svg>
<svg style="position:absolute;left:2379px;top:1188px;" width="24" height="28" viewBox="0 0 24 28"><defs><linearGradient id="ig" x1="0" y1="0" x2="0" y2="1"><stop offset="0" stop-color="#e4e4e4"/><stop offset="1" stop-color="#a8a8a8"/></linearGradient></defs><path d="M6 13 L6 8 Q6 2 12 2 Q18 2 18 8 L18 13" fill="none" stroke="#cfcfcf" stroke-width="2.6"/><rect x="2" y="12" width="20" height="15" rx="2" fill="url(#ig)"/><rect x="10.5" y="17" width="3" height="5" fill="#333"/></svg>
<div style="position:absolute;left:2460px;top:1193.7px;font-size:19.3px;line-height:19.3px;font-weight:400;color:#f0f0f0;white-space:pre;">Fill:</div>
<div style="position:absolute;left:2495px;top:1186px;width:101px;height:33px;border-radius:4px;background:#5d5d5d;"></div>
<div style="position:absolute;left:2496px;top:1187px;width:99px;height:31px;box-sizing:border-box;border:1.5px solid #262626;background:#383838;border-radius:3px;"></div>
<div style="position:absolute;left:2564px;top:1187px;width:31px;height:31px;box-sizing:border-box;border:1.5px solid #262626;border-left:none;border-radius:0 4px 4px 0;background:linear-gradient(#686868,#555);"></div>
<svg style="position:absolute;left:2573.5px;top:1198.5px;" width="12" height="8" viewBox="0 0 12 8"><path d="M1 1 L11 1 L6 7 Z" fill="#e6e6e6"/></svg>
<div style="position:absolute;left:2505px;top:1193.2px;font-size:19.3px;line-height:19.3px;font-weight:400;color:#f0f0f0;white-space:pre;">100%</div>
<div style="position:absolute;left:2175px;top:1231px;width:439px;height:3px;background:#3c3c3c;"></div>
<div style="position:absolute;left:2175px;top:1234px;width:407px;height:294px;background:#474747;"></div>
<div style="position:absolute;left:2582px;top:1234px;width:30px;height:294px;background:linear-gradient(90deg,#3a3a3a,#444);"></div>
<div style="position:absolute;left:2175px;top:1234px;width:407px;height:76px;background:#535353;"></div>
<div style="position:absolute;left:2236px;top:1234px;width:2px;height:76px;background:#464646;"></div>
<div style="position:absolute;left:2175px;top:1310px;width:407px;height:2px;background:#3e3e3e;"></div>
<svg style="position:absolute;left:2192px;top:1262px;" width="28" height="18" viewBox="0 0 28 18"><path d="M1.5 9 Q14 -3 26.5 9 Q14 21 1.5 9 Z" fill="none" stroke="#cfcfcf" stroke-width="2.2"/><circle cx="14" cy="9" r="5" fill="#cfcfcf"/><circle cx="14" cy="8" r="2.2" fill="#555"/></svg>
<svg style="position:absolute;left:2243px;top:1239px" width="66" height="65" viewBox="0 0 66 65">
      <rect x="0" y="0" width="66" height="65" fill="#1b1b1b"/>
      <rect x="1" y="1" width="64" height="63" fill="#2a2622"/>
      <rect x="1" y="48" width="64" height="16" fill="#4a4846"/>
      <rect x="1" y="10" width="14" height="40" fill="#6a4a30"/><rect x="1" y="22" width="12" height="14" fill="#2d8ed0"/>
      <rect x="1" y="8" width="12" height="5" fill="#e8e8ec"/>
      <rect x="19" y="11" width="22" height="7" fill="#eceef2"/>
      <rect x="18" y="18" width="24" height="32" rx="4" fill="#b08866"/>
      <rect x="18" y="26" width="24" height="4" fill="#4aa060"/>
      <rect x="18" y="30" width="24" height="14" fill="#2a98d8"/>
      <path d="M19 44 L26 33 L34 44 Z" fill="#f0f0f0"/>
      <rect x="47" y="11" width="17" height="7" fill="#eceef2"/>
      <rect x="46" y="18" width="19" height="32" rx="4" fill="#b08866"/>
      <rect x="46" y="26" width="19" height="4" fill="#e0d040"/>
      <rect x="46" y="30" width="19" height="14" fill="#2a98d8"/>
      <path d="M47 44 L53 34 L60 44 Z" fill="#f0f0f0"/>
    </svg>
<svg style="position:absolute;left:2313px;top:1256px;" width="18" height="34" viewBox="0 0 18 34"><defs><linearGradient id="ig" x1="0" y1="0" x2="0" y2="1"><stop offset="0" stop-color="#e4e4e4"/><stop offset="1" stop-color="#a8a8a8"/></linearGradient></defs><rect x="3" y="2" width="12" height="14" rx="6" fill="none" stroke="#bdbdbd" stroke-width="3.5"/><rect x="3" y="18" width="12" height="14" rx="6" fill="none" stroke="#bdbdbd" stroke-width="3.5"/><rect x="7" y="10" width="4" height="14" fill="#bdbdbd"/></svg>
<svg style="position:absolute;left:2338px;top:1240px" width="64" height="64" viewBox="0 0 64 64">
      <rect x="0" y="0" width="64" height="64" fill="#000"/><rect x="0" y="0" width="64" height="64" fill="none" stroke="#2a2a2a" stroke-width="1.5"/>
      <path d="M21 11 L43 11 L43 15 Q45 18 45 24 L45 50 Q45 54 40 54 L24 54 Q19 54 19 50 L19 24 Q19 18 21 15 Z" fill="#fff"/>
    </svg>
<div style="position:absolute;left:2419px;top:1266.7px;font-size:19.2px;line-height:19.2px;font-weight:400;color:#f0f0f0;white-space:pre;">Layer 0</div>
<div style="position:absolute;left:2175px;top:1312px;width:407px;height:78px;background:#535353;"></div>
<div style="position:absolute;left:2238px;top:1312px;width:344px;height:78px;background:#6b7b92;"></div>
<div style="position:absolute;left:2236px;top:1312px;width:2px;height:78px;background:#464646;"></div>
<svg style="position:absolute;left:2192px;top:1340px;" width="28" height="18" viewBox="0 0 28 18"><path d="M1.5 9 Q14 -3 26.5 9 Q14 21 1.5 9 Z" fill="none" stroke="#cfcfcf" stroke-width="2.2"/><circle cx="14" cy="9" r="5" fill="#cfcfcf"/><circle cx="14" cy="8" r="2.2" fill="#555"/></svg>
<svg style="position:absolute;left:2240px;top:1314px" width="72" height="72" viewBox="0 0 72 72">
      <path d="M1 18 L1 1 L18 1 M54 1 L71 1 L71 18 M71 54 L71 71 L54 71 M18 71 L1 71 L1 54" fill="none" stroke="#fff" stroke-width="2"/>
      <rect x="4" y="4" width="64" height="64" fill="#111"/>
      <rect x="7" y="7" width="58" height="58" fill="#eee2e8"/>
    </svg>
<div style="position:absolute;left:2325px;top:1343.7px;font-size:19.25px;line-height:19.25px;font-weight:400;color:#f4f4f4;white-space:pre;">Background</div>
<div style="position:absolute;left:2175px;top:1390px;width:407px;height:1px;background:#3e3e3e;"></div>
<div style="position:absolute;left:2175px;top:1528px;width:439px;height:4px;background:#3a3a3a;"></div>
<div style="position:absolute;left:2175px;top:1532px;width:439px;height:38px;background:#535353;box-shadow:inset 0 1.5px 0 #636363;"></div>
<svg style="position:absolute;left:2205px;top:1541px;" width="30" height="20" viewBox="0 0 30 20"><rect x="2" y="3" width="16" height="14" rx="7" fill="none" stroke="#c4c4c4" stroke-width="3.2"/><rect x="12" y="3" width="16" height="14" rx="7" fill="none" stroke="#c4c4c4" stroke-width="3.2"/><rect x="9" y="8.5" width="12" height="3" fill="#c4c4c4"/></svg>
<svg style="position:absolute;left:2261px;top:1536px;" width="34" height="30" viewBox="0 0 34 30"><text x="1" y="23" font-family="Liberation Serif" font-style="italic" font-size="26" fill="#c4c4c4">fx</text><rect x="26" y="25" width="6" height="2" fill="#c4c4c4"/><rect x="28" y="25" width="2" height="4" fill="#c4c4c4"/></svg>
<svg style="position:absolute;left:2316px;top:1540px;" width="28" height="24" viewBox="0 0 28 24"><defs><linearGradient id="ig" x1="0" y1="0" x2="0" y2="1"><stop offset="0" stop-color="#e4e4e4"/><stop offset="1" stop-color="#a8a8a8"/></linearGradient></defs><rect x="1" y="2" width="26" height="20" fill="url(#ig)"/><rect x="1" y="2" width="26" height="2" fill="#3a3a3a"/><circle cx="14" cy="13" r="4.5" fill="#333"/></svg>
<svg style="position:absolute;left:2371px;top:1540px;" width="34" height="28" viewBox="0 0 34 28"><circle cx="11" cy="11" r="9.5" fill="none" stroke="#c4c4c4" stroke-width="2.2"/><path d="M11 1.5 A9.5 9.5 0 0 1 11 20.5 Z" fill="#c4c4c4" opacity="0.5"/><path d="M5 17 L17 5" stroke="#c4c4c4" stroke-width="2.4"/><rect x="21" y="21" width="6" height="2" fill="#c4c4c4"/><rect x="23" y="21" width="2" height="4" fill="#c4c4c4"/></svg>
<svg style="position:absolute;left:2424px;top:1538px;" width="26" height="24" viewBox="0 0 26 24"><defs><linearGradient id="ig" x1="0" y1="0" x2="0" y2="1"><stop offset="0" stop-color="#e4e4e4"/><stop offset="1" stop-color="#a8a8a8"/></linearGradient></defs><path d="M1 2 L9 2 L11 5 L25 5 L25 22 L1 22 Z" fill="url(#ig)"/><rect x="1" y="4" width="24" height="2" fill="#3a3a3a"/></svg>
<svg style="position:absolute;left:2478px;top:1538px;" width="24" height="24" viewBox="0 0 24 24"><defs><linearGradient id="ig" x1="0" y1="0" x2="0" y2="1"><stop offset="0" stop-color="#e4e4e4"/><stop offset="1" stop-color="#a8a8a8"/></linearGradient></defs><path d="M4 1 L22 1 L22 22 L10 22 L10 16 L4 16 Z" fill="url(#ig)"/><path d="M3 18 L8 18 L8 23 Z" fill="#cfcfcf"/><rect x="4" y="1" width="18" height="2" fill="#3a3a3a"/></svg>
<svg style="position:absolute;left:2531px;top:1537px;" width="24" height="28" viewBox="0 0 24 28"><path d="M2 8 L22 8 M8 8 L8 4 L16 4 L16 8" fill="none" stroke="#c4c4c4" stroke-width="2.2"/><path d="M4 11 L20 11 L19 26 L5 26 Z" fill="none" stroke="#c4c4c4" stroke-width="2.2"/><path d="M9 13 L9 24 M12 13 L12 24 M15 13 L15 24" stroke="#c4c4c4" stroke-width="1.6"/></svg>
<div style="position:absolute;left:584px;top:330px;width:1136px;height:1136px;background:#eee2e8;box-shadow:0 2px 6px rgba(0,0,0,0.45);"></div>
<svg style="position:absolute;left:860px;top:480px" width="520" height="860" viewBox="860 480 520 860">
    <defs>
      <clipPath id="jclip"><path d="M929 637 C 920 660, 907 700, 903 740 C 900 770, 898 785, 897 800 L 897 1150 C 897 1210, 905 1262, 935 1290 C 965 1312, 1050 1316, 1120 1315 C 1200 1314, 1270 1305, 1300 1285 C 1330 1262, 1337 1210, 1337 1150 L 1337 800 C 1337 785, 1336 770, 1334 740 C 1330 700, 1318 662, 1310 637 Z"/></clipPath>
      <linearGradient id="pbH" x1="0" y1="0" x2="1" y2="0">
        <stop offset="0" stop-color="#76604e"/><stop offset="0.06" stop-color="#b08e72"/><stop offset="0.14" stop-color="#bf9c7a"/>
        <stop offset="0.5" stop-color="#c3a07e"/><stop offset="0.88" stop-color="#b89474"/><stop offset="0.96" stop-color="#94765e"/><stop offset="1" stop-color="#5e4a3c"/>
      </linearGradient>
      <linearGradient id="pbV" x1="0" y1="0" x2="0" y2="1">
        <stop offset="0" stop-color="#000" stop-opacity="0"/><stop offset="0.78" stop-color="#000" stop-opacity="0"/>
        <stop offset="0.92" stop-color="#2a1c14" stop-opacity="0.35"/><stop offset="1" stop-color="#1e140e" stop-opacity="0.9"/>
      </linearGradient>
      <linearGradient id="lidG" x1="0" y1="0" x2="1" y2="0">
        <stop offset="0" stop-color="#dde2ee"/><stop offset="0.1" stop-color="#f0f2f8"/><stop offset="0.6" stop-color="#eef0f7"/><stop offset="0.92" stop-color="#dce0ea"/><stop offset="1" stop-color="#b8bdcb"/>
      </linearGradient>
      <pattern id="ridge" x="0" y="0" width="10" height="60" patternUnits="userSpaceOnUse">
        <rect x="0" y="0" width="10" height="60" fill="none"/><rect x="5" y="0" width="2.4" height="60" fill="#cdd3e2" opacity="0.7"/>
      </pattern>
      <linearGradient id="blueG" x1="0" y1="0" x2="1" y2="0">
        <stop offset="0" stop-color="#2a8fd0"/><stop offset="0.15" stop-color="#3aaae2"/><stop offset="0.55" stop-color="#33a6e6"/><stop offset="0.9" stop-color="#1f8ad6"/><stop offset="1" stop-color="#1a6fb8"/>
      </linearGradient>
      <linearGradient id="blueV" x1="0" y1="0" x2="0" y2="1">
        <stop offset="0" stop-color="#ffffff" stop-opacity="0.10"/><stop offset="1" stop-color="#ffffff" stop-opacity="0"/>
      </linearGradient>
      <linearGradient id="greenG" x1="0" y1="0" x2="1" y2="0">
        <stop offset="0" stop-color="#3f9a5e"/><stop offset="0.2" stop-color="#5cb87a"/><stop offset="0.5" stop-color="#66c084"/><stop offset="0.85" stop-color="#4fae70"/><stop offset="1" stop-color="#2f7c4a"/>
      </linearGradient>
      <filter id="speck" x="0" y="0" width="100%" height="100%">
        <feTurbulence type="fractalNoise" baseFrequency="0.2" numOctaves="1" seed="5" result="n"/>
        <feColorMatrix in="n" type="matrix" values="0 0 0 0 0.22  0 0 0 0 0.16  0 0 0 0 0.12  -30 0 0 0 10.2" result="d"/>
        <feComposite in="d" in2="SourceGraphic" operator="in"/>
      </filter>
      <filter id="soft"><feGaussianBlur stdDeviation="1.2"/></filter>
      <filter id="soft3"><feGaussianBlur stdDeviation="3"/></filter>
    </defs>
    <!-- subtle shadow around jar -->
    <path d="M929 637 C 920 660, 907 700, 903 740 C 900 770, 898 785, 897 800 L 897 1150 C 897 1210, 905 1262, 935 1290 C 965 1312, 1050 1316, 1120 1315 C 1200 1314, 1270 1305, 1300 1285 C 1330 1262, 1337 1210, 1337 1150 L 1337 800 C 1337 785, 1336 770, 1334 740 C 1330 700, 1318 662, 1310 637 Z" fill="#d9c9d2" opacity="0.5" filter="url(#soft3)" transform="translate(0,4)"/>
    <g clip-path="url(#jclip)">
      <rect x="880" y="620" width="480" height="720" fill="url(#pbH)"/>
      <rect x="880" y="620" width="480" height="720" fill="#000" filter="url(#speck)" opacity="0.5"/>
      <rect x="880" y="620" width="480" height="720" fill="url(#pbV)"/>
      <!-- bottom dark rim -->
      <path d="M897 1240 C 910 1285, 960 1300, 1120 1300 C 1270 1300, 1320 1285, 1337 1240 L 1337 1330 L 897 1330 Z" fill="#2e2019" opacity="0.85" filter="url(#soft)"/>
      <!-- shoulder shading -->
      <path d="M897 636 L 1337 636 L 1337 646 L 897 646 Z" fill="#6e5a4a" opacity="0.18" filter="url(#soft)"/>
      <!-- highlight reflections -->
      <path d="M1015 657 L 1110 655 L 1111 690 L 1108 745 L 1092 752 L 1075 760 L 1060 772 L 1046 766 L 1040 748 L 1036 770 L 1012 782 L 1000 776 L 1003 722 L 1012 690 Z" fill="#efe4ea" opacity="0.92" filter="url(#soft)"/>
      <path d="M1012 652 L 1118 650 L 1118 656 L 1012 658 Z" fill="#e8d8d0" opacity="0.6"/>
      <path d="M930 665 L 952 662 L 948 790 L 926 790 Z" fill="#e8d8d8" opacity="0.18" filter="url(#soft3)"/>
      <path d="M1215 660 L 1300 665 L 1290 690 L 1210 690 Z" fill="#ffffff" opacity="0.12" filter="url(#soft3)"/>
      <path d="M1118 730 Q 1124 724 1134 727 Q 1143 732 1140 739 Q 1132 742 1126 738 Q 1118 738 1118 730 Z" fill="#2a2220"/><circle cx="1141" cy="746" r="3" fill="#4a3a30"/>
      <!-- label -->
      <rect x="880" y="794" width="480" height="50" fill="url(#greenG)"/>
      <rect x="880" y="806" width="480" height="18" fill="#86dca4" opacity="0.35" filter="url(#soft)"/>
      <rect x="880" y="843" width="480" height="262" fill="url(#blueG)"/>
      <rect x="880" y="843" width="480" height="262" fill="url(#blueV)"/>
      <ellipse cx="1010" cy="905" rx="170" ry="55" fill="#a8e0ff" opacity="0.2" filter="url(#soft3)"/>
      <!-- mountain -->
      <path d="M897 1098 L 903.5 1069 L 911 1044 L 920 1014 L 935 975 L 952.9 942 L 970.9 955.5 L 982.9 969 L 994.9 993 L 1002.3 1014 L 1018.8 1028.9 L 1047.3 1045.3 L 1084.7 1060.3 L 1100 1066 L 1146.6 1090 L 1198.7 1100 L 1250.8 1105 L 1256 1112 L 897 1112 Z" fill="#f2f3f8"/>
      <path d="M952.9 942 L 970.9 955.5 L 982.9 969 L 994.9 993 L 1002.3 1014 L 1018.8 1028.9 L 1047.3 1045.3 L 1084.7 1060.3 L 1100 1066 L 1146.6 1090 L 1198.7 1100 L 1250.8 1105" fill="none" stroke="#1a3a7a" stroke-width="2.4"/>
      <path d="M952.9 942 L 957.4 948 L 970.9 972 L 973.9 1008 L 970.9 1057 L 973.9 1077 L 982.9 1092 L 991.9 1112 L 897 1112 L 897.5 1098 L 903.5 1069 L 911 1044 L 920 1014 L 935 975 Z" fill="#1f2a74"/>
      <path d="M938 990 L 943 994 L 934 1020 L 929 1040 L 924 1062 L 915 1080 L 908 1098 L 901 1100 L 906 1082 L 913 1062 L 919 1040 L 926 1018 Z" fill="#eef0f6"/>
      <path d="M911 1036 L 922 1040 L 918 1062 L 910 1078 L 904 1076 L 906 1058 Z" fill="#eef0f6"/>
      <path d="M976 986 L 979 988 L 988 1015 L 997 1044 L 994 1043 L 983 1016 Z" fill="#1f2a74"/>
      <path d="M1018.8 1049.8 L 1036.8 1057.3 L 1042.8 1064.8 L 1054.8 1072.3 L 1062.3 1079.8 L 1072.7 1091.8 L 1057.8 1087.3 L 1039.8 1081.3 L 1027.8 1072.3 L 1021.8 1064.8 Z" fill="#28307e"/>
      <path d="M991.9 1077 L 1012 1086 L 1045 1098 L 1082 1108 L 1040 1108 L 1000 1096 Z" fill="#28307e"/>
      <path d="M880 1098 L 1100 1109 L 1250 1106 L 1360 1100 L 1360 1146 L 1200 1155 L 1100 1153 L 880 1143 Z" fill="url(#greenG)"/>
      <!-- texts -->
      <g transform="translate(951 898) scale(0.8 1)"><text x="0" y="0" font-family="Liberation Sans" font-weight="400" font-size="51" fill="#eef2fa" stroke="#eef2fa" stroke-width="1.9" textLength="359" lengthAdjust="spacing">REINBERGER</text></g>
      <g transform="translate(951 941) scale(0.76 1)"><text x="0" y="0" font-family="Liberation Sans" font-weight="700" font-size="46" fill="#18396e" textLength="380" lengthAdjust="spacing">NUT BUTTER</text></g>
      <g transform="translate(986 975) scale(0.82 1)"><text x="0" y="0" font-family="Liberation Sans" font-weight="700" font-size="16" fill="#1e3a74" textLength="260" lengthAdjust="spacing">Ten amazing nuts &amp; seeds</text></g>
      <g transform="translate(1010 1003) scale(0.82 1)"><text x="0" y="0" font-family="Liberation Sans" font-weight="700" font-size="16" fill="#1e3a74" textLength="199" lengthAdjust="spacing">Vegan &amp; gluten-free</text></g>
      <g transform="translate(945 1135) rotate(1.1) scale(0.74 1)"><text x="0" y="0" font-family="Liberation Sans" font-weight="400" font-size="30" fill="#0f3f4a" stroke="#0f3f4a" stroke-width="1.2" textLength="405" lengthAdjust="spacing">SENSATIONAL SEEDS</text></g>
    </g>
    <!-- neck outside clip -->
    <path d="M925 600 L 1312 600 L 1312 640 L 925 640 Z" fill="#8a7460"/>
    <path d="M925 603 L 1312 603 L 1312 617 L 925 617 Z" fill="#7a6654"/>
    <path d="M925 603 L 1312 603 L 1312 608 L 925 608 Z" fill="#3e3028" opacity="0.9"/>
    <path d="M921 617 L 1314 617 Q 1317 627 1314 637 L 921 637 Q 918 627 921 617 Z" fill="#9c8468"/>
    <path d="M922 624 L 1313 624" stroke="#c2ae9a" stroke-width="2.5" opacity="0.45"/>
    <path d="M922 633 L 1313 633" stroke="#6a5442" stroke-width="2" opacity="0.35"/>
    <!-- lid -->
    <path d="M920 514 Q 920 511 926 511 Q 1117 508 1310 513 Q 1318 514 1318 520 L 1318 560 Q 1320 570 1316 577 L 1319 586 Q 1323 588 1323 594 Q 1323 602 1316 603 L 914 603 Q 906 602 906 596 Q 906 589 914 587 L 919 584 Q 914 570 916 555 Q 918 540 916 530 Q 915 518 920 514 Z" fill="url(#lidG)" stroke="#5e6270" stroke-width="1.3"/>
    <rect x="930" y="516" width="380" height="42" fill="url(#ridge)"/>
    <path d="M917 560 L 1318 560 L 1318 577 L 917 577 Z" fill="#b8c0d2" opacity="0.22"/>
    <path d="M914 590 L 1320 590 L 1320 600 L 914 600 Z" fill="#ffffff" opacity="0.25"/>
    </svg>
<div style="position:absolute;left:2612px;top:120px;width:2px;height:1450px;background:#262626;"></div>
<div style="position:absolute;left:132px;top:1569px;width:2482px;height:1px;background:#262626;"></div>
</body></html>
